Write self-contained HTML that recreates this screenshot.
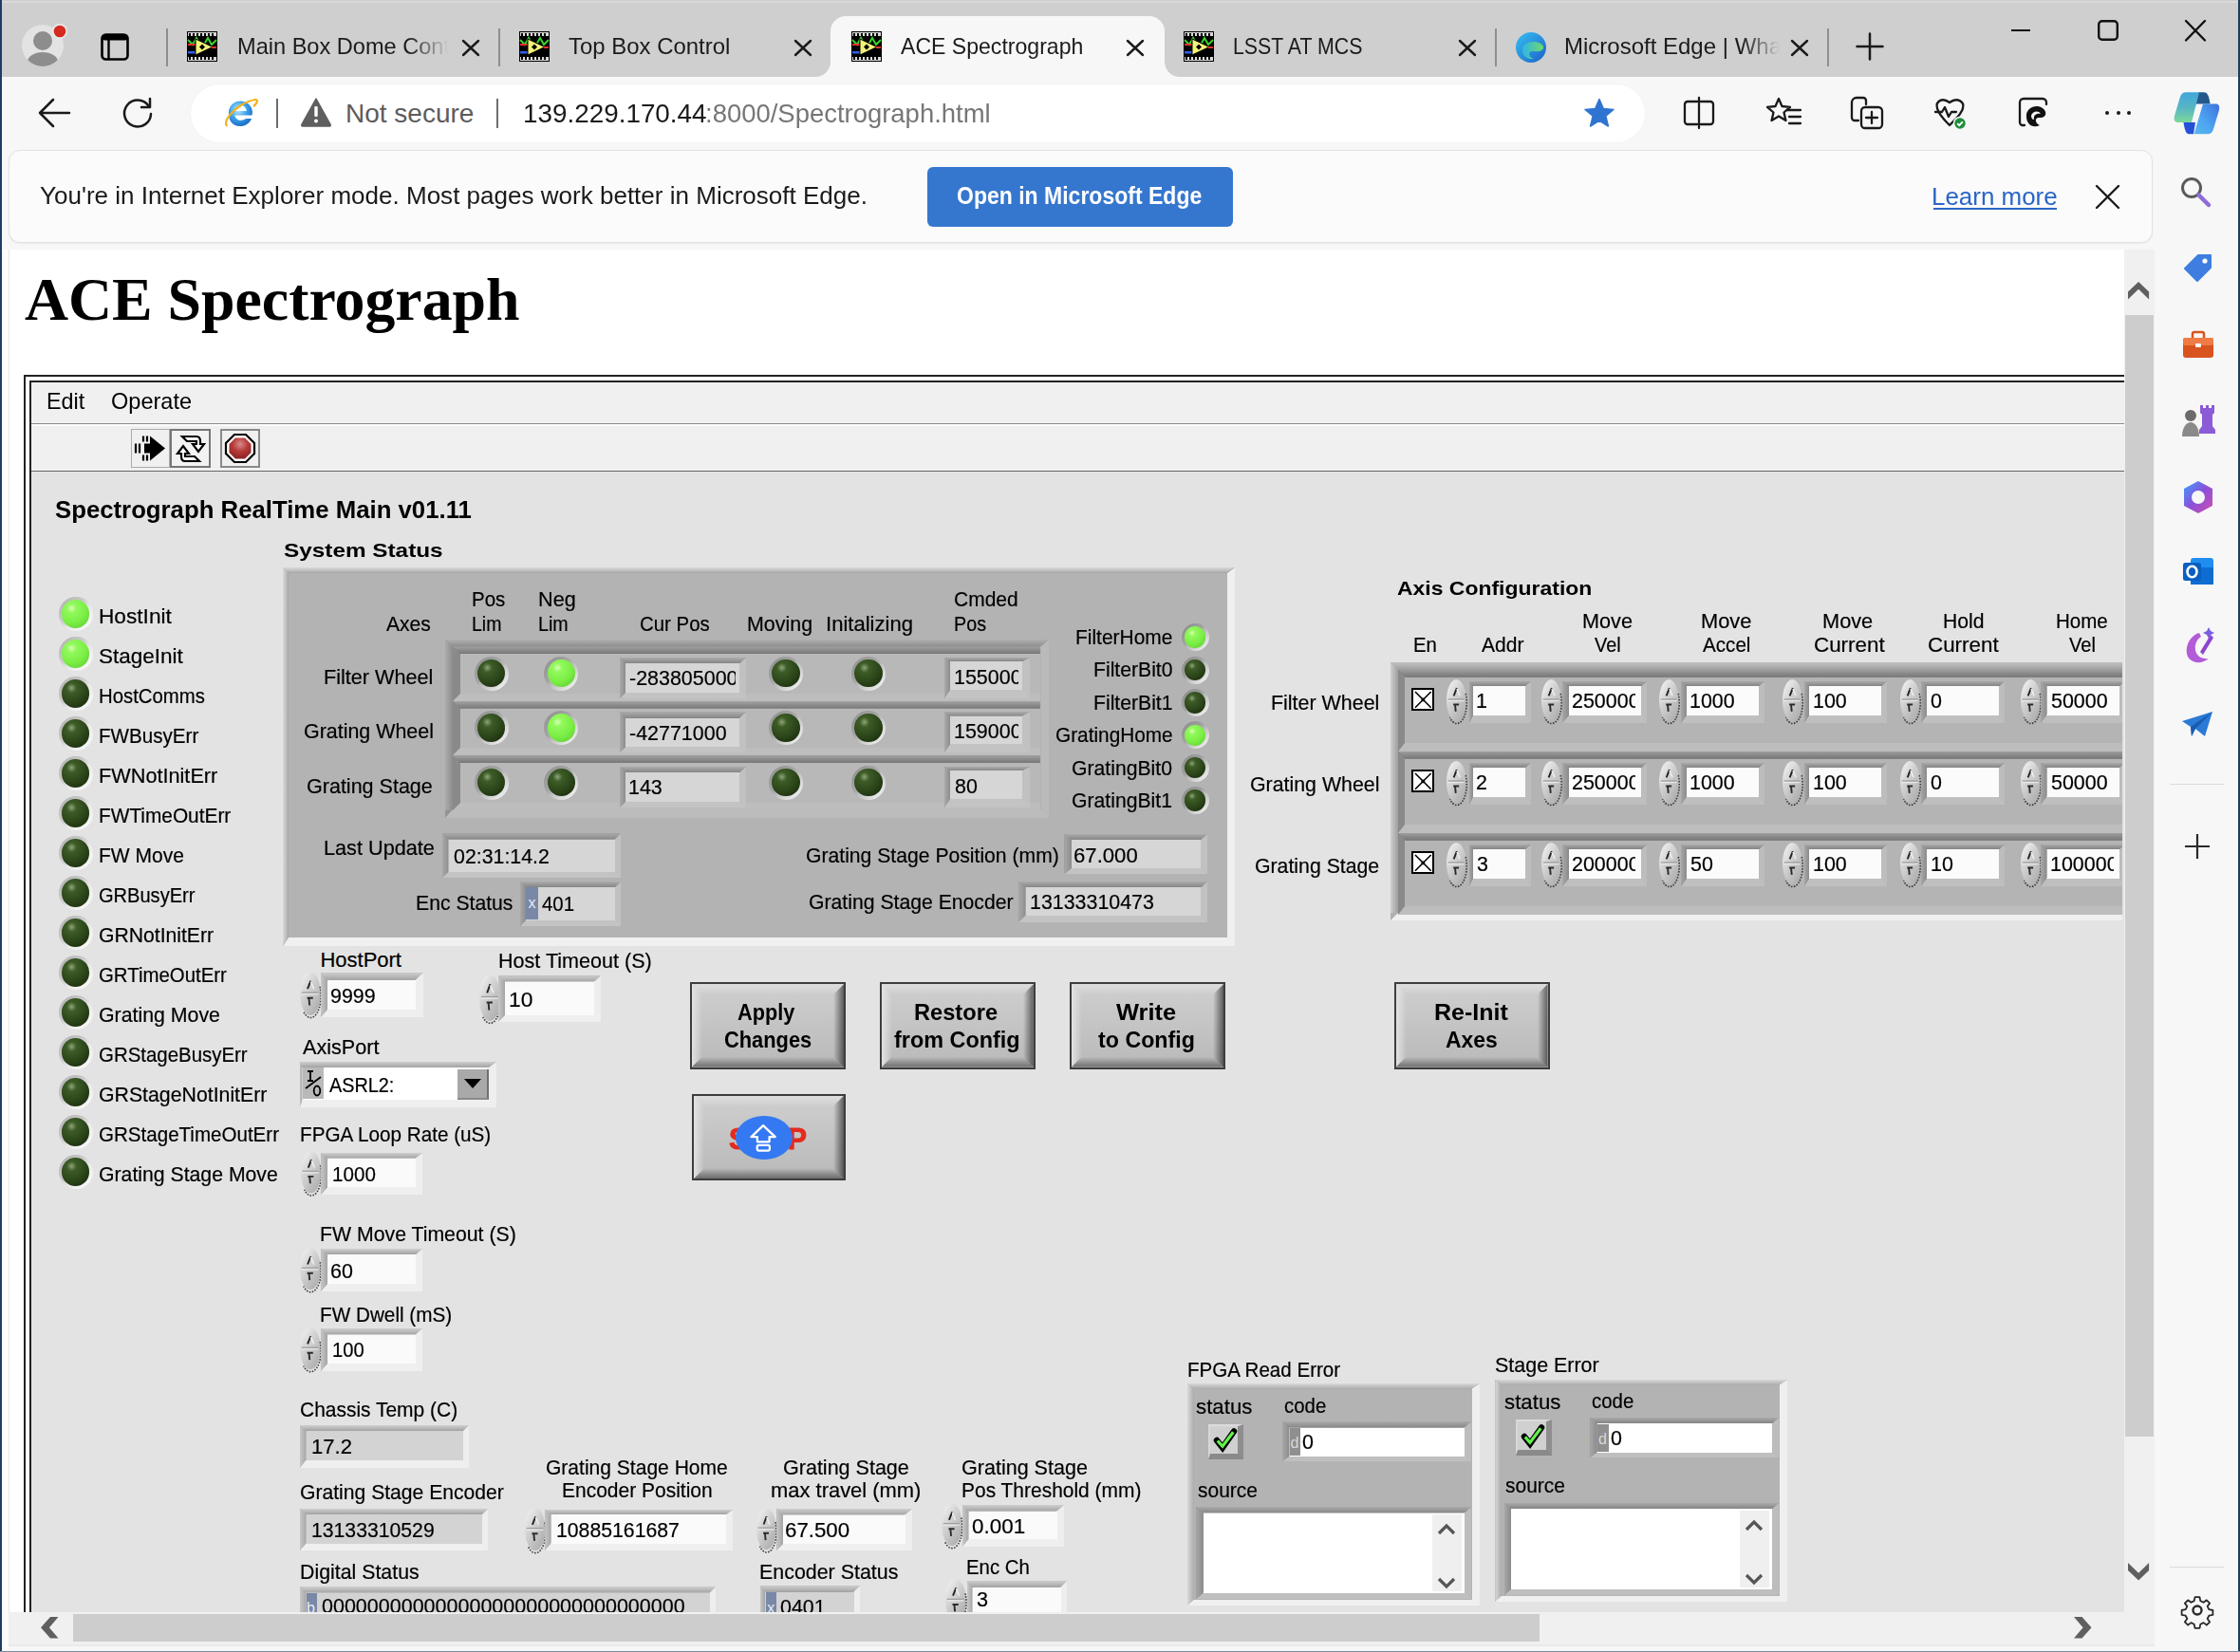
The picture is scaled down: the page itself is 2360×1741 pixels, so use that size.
<!DOCTYPE html>
<html><head><meta charset="utf-8"><style>
html,body{margin:0;padding:0}
body{width:2360px;height:1741px;position:relative;overflow:hidden;background:#f7f7f7;font-family:"Liberation Sans",sans-serif}
.a{position:absolute}
.tx{position:absolute;line-height:0;white-space:nowrap;transform-origin:0 0}
svg{overflow:visible}
</style></head><body>
<svg width="0" height="0" style="position:absolute"><defs>
<linearGradient id="spg" x1="0.1" y1="0" x2="0.9" y2="1"><stop offset="0" stop-color="#f4f4f4"/><stop offset=".4" stop-color="#d2d2d2"/><stop offset="1" stop-color="#a9a9a9"/></linearGradient>
</defs></svg>
<div class="a " style="left:0.00px;top:0.00px;width:2360.00px;height:1741.00px;background:#f7f7f7"></div>
<div class="a " style="left:0.00px;top:0.00px;width:2360.00px;height:81.00px;background:#cfcfcf"></div>
<div class="a " style="left:0.00px;top:1.00px;width:2360.00px;height:2.00px;background:#d9d9d9"></div>
<svg class="a" style="left:20px;top:22px" width="56" height="54" viewBox="0 0 56 54">
<circle cx="25" cy="26" r="22" fill="#e3e3e3"/>
<clipPath id="avc"><circle cx="25" cy="26" r="22"/></clipPath>
<g clip-path="url(#avc)"><circle cx="25" cy="21" r="10" fill="#8d8d8d"/><ellipse cx="25" cy="43" rx="16" ry="10" fill="#8d8d8d"/></g>
<circle cx="43" cy="11" r="8" fill="#eaeaea"/><circle cx="43" cy="11" r="6.3" fill="#d52b1e"/>
</svg>
<svg class="a" style="left:105px;top:34px" width="32" height="32" viewBox="0 0 32 32">
<rect x="2.5" y="2.5" width="27" height="26" rx="4" fill="none" stroke="#000" stroke-width="2.6"/>
<rect x="2.5" y="2.5" width="27" height="6" rx="3" fill="#000"/><path d="M9.5 8v20" stroke="#000" stroke-width="2.4"/></svg>
<div class="a " style="left:175.00px;top:30.00px;width:2.00px;height:40.00px;background:#8e8e8e"></div>
<div class="a " style="left:525.00px;top:30.00px;width:2.00px;height:40.00px;background:#8e8e8e"></div>
<div class="a " style="left:1574.50px;top:30.00px;width:2.00px;height:40.00px;background:#8e8e8e"></div>
<div class="a " style="left:1925.00px;top:30.00px;width:2.00px;height:40.00px;background:#8e8e8e"></div>
<div class="a " style="left:875.00px;top:17.00px;width:352.00px;height:64.00px;background:#f7f7f7;border-radius:16px 16px 0 0"></div>
<div class="a " style="left:859.00px;top:65.00px;width:16.00px;height:16.00px;background:radial-gradient(circle at 0 0,#cfcfcf 15.5px,#f7f7f7 16.5px)"></div>
<div class="a " style="left:1227.00px;top:65.00px;width:16.00px;height:16.00px;background:radial-gradient(circle at 100% 0,#cfcfcf 15.5px,#f7f7f7 16.5px)"></div>
<svg class="a" style="left:197px;top:33px" width="32" height="32" viewBox="0 0 32 32">
<rect x="0" y="0" width="32" height="32" fill="#000"/>
<rect x="1" y="1" width="30" height="4" fill="#fff" opacity=".85"/><rect x="1" y="27" width="30" height="4" fill="#fff" opacity=".85"/>
<path d="M3 2v3M7 2v3M11 2v3M15 2v3M19 2v3M23 2v3M27 2v3M3 27v3M7 27v3M11 27v3M15 27v3M19 27v3M23 27v3M27 27v3" stroke="#000" stroke-width="2"/>
<path d="M1 9 L6 14 L10 7 L14 14 M18 14 L22 7 L26 14 L31 9" stroke="#3ad12c" stroke-width="2" fill="none"/>
<rect x="1" y="13" width="8" height="2" fill="#e53030"/><rect x="1" y="21" width="8" height="2.5" fill="#2f5ee8"/>
<path d="M9 8 L27 16.5 L9 25 Z" fill="#f3f37a" stroke="#000" stroke-width="1"/>
<path d="M13 16.5 l3 -3 l3 3 l-3 3z" fill="#000"/>
<rect x="26" y="16" width="5" height="2" fill="#e53030"/>
</svg>
<svg class="a" style="left:547px;top:33px" width="32" height="32" viewBox="0 0 32 32">
<rect x="0" y="0" width="32" height="32" fill="#000"/>
<rect x="1" y="1" width="30" height="4" fill="#fff" opacity=".85"/><rect x="1" y="27" width="30" height="4" fill="#fff" opacity=".85"/>
<path d="M3 2v3M7 2v3M11 2v3M15 2v3M19 2v3M23 2v3M27 2v3M3 27v3M7 27v3M11 27v3M15 27v3M19 27v3M23 27v3M27 27v3" stroke="#000" stroke-width="2"/>
<path d="M1 9 L6 14 L10 7 L14 14 M18 14 L22 7 L26 14 L31 9" stroke="#3ad12c" stroke-width="2" fill="none"/>
<rect x="1" y="13" width="8" height="2" fill="#e53030"/><rect x="1" y="21" width="8" height="2.5" fill="#2f5ee8"/>
<path d="M9 8 L27 16.5 L9 25 Z" fill="#f3f37a" stroke="#000" stroke-width="1"/>
<path d="M13 16.5 l3 -3 l3 3 l-3 3z" fill="#000"/>
<rect x="26" y="16" width="5" height="2" fill="#e53030"/>
</svg>
<svg class="a" style="left:897px;top:33px" width="32" height="32" viewBox="0 0 32 32">
<rect x="0" y="0" width="32" height="32" fill="#000"/>
<rect x="1" y="1" width="30" height="4" fill="#fff" opacity=".85"/><rect x="1" y="27" width="30" height="4" fill="#fff" opacity=".85"/>
<path d="M3 2v3M7 2v3M11 2v3M15 2v3M19 2v3M23 2v3M27 2v3M3 27v3M7 27v3M11 27v3M15 27v3M19 27v3M23 27v3M27 27v3" stroke="#000" stroke-width="2"/>
<path d="M1 9 L6 14 L10 7 L14 14 M18 14 L22 7 L26 14 L31 9" stroke="#3ad12c" stroke-width="2" fill="none"/>
<rect x="1" y="13" width="8" height="2" fill="#e53030"/><rect x="1" y="21" width="8" height="2.5" fill="#2f5ee8"/>
<path d="M9 8 L27 16.5 L9 25 Z" fill="#f3f37a" stroke="#000" stroke-width="1"/>
<path d="M13 16.5 l3 -3 l3 3 l-3 3z" fill="#000"/>
<rect x="26" y="16" width="5" height="2" fill="#e53030"/>
</svg>
<svg class="a" style="left:1247px;top:33px" width="32" height="32" viewBox="0 0 32 32">
<rect x="0" y="0" width="32" height="32" fill="#000"/>
<rect x="1" y="1" width="30" height="4" fill="#fff" opacity=".85"/><rect x="1" y="27" width="30" height="4" fill="#fff" opacity=".85"/>
<path d="M3 2v3M7 2v3M11 2v3M15 2v3M19 2v3M23 2v3M27 2v3M3 27v3M7 27v3M11 27v3M15 27v3M19 27v3M23 27v3M27 27v3" stroke="#000" stroke-width="2"/>
<path d="M1 9 L6 14 L10 7 L14 14 M18 14 L22 7 L26 14 L31 9" stroke="#3ad12c" stroke-width="2" fill="none"/>
<rect x="1" y="13" width="8" height="2" fill="#e53030"/><rect x="1" y="21" width="8" height="2.5" fill="#2f5ee8"/>
<path d="M9 8 L27 16.5 L9 25 Z" fill="#f3f37a" stroke="#000" stroke-width="1"/>
<path d="M13 16.5 l3 -3 l3 3 l-3 3z" fill="#000"/>
<rect x="26" y="16" width="5" height="2" fill="#e53030"/>
</svg>
<svg class="a" style="left:1596px;top:33px" width="34" height="34" viewBox="0 0 34 34">
<defs><linearGradient id="edg1" x1="0" y1="0" x2="1" y2="1"><stop offset="0" stop-color="#35c1f1"/><stop offset="1" stop-color="#1d5fc9"/></linearGradient>
<linearGradient id="edg2" x1="0" y1="0" x2="1" y2="0"><stop offset="0" stop-color="#2fb5e8"/><stop offset="1" stop-color="#6ed76a"/></linearGradient></defs>
<circle cx="17" cy="17" r="16" fill="url(#edg1)"/>
<path d="M8 19 C 8 10, 26 8, 30 16 C 31 20, 26 22, 20 21 C 14 20, 13 26, 20 29 C 12 30, 7 25, 8 19Z" fill="url(#edg2)"/>
<path d="M12 20 C 13 14, 23 14, 24 18 C 19 17, 15 19, 16 24 C 13 24, 12 22, 12 20Z" fill="#fff" opacity=".0"/>
</svg>
<div class="a" style="left:240px;top:20px;width:260px;height:50px;-webkit-mask-image:linear-gradient(90deg,#000 0,#000 190px,transparent 232px);mask-image:linear-gradient(90deg,#000 0,#000 190px,transparent 232px);">
<div class="tx" style="left:9.62px;top:29.30px;font-family:'Liberation Sans';font-weight:400;font-size:24px;color:#1b1b1b;transform:scaleX(0.9820);">Main Box Dome Control</div>
</div>
<div class="tx" style="left:599.00px;top:49.30px;font-family:'Liberation Sans';font-weight:400;font-size:24px;color:#1b1b1b;transform:scaleX(0.9975);">Top Box Control</div>
<div class="tx" style="left:949.00px;top:49.40px;font-family:'Liberation Sans';font-weight:400;font-size:24px;color:#1b1b1b;transform:scaleX(0.9609);">ACE Spectrograph</div>
<div class="tx" style="left:1299.11px;top:49.30px;font-family:'Liberation Sans';font-weight:400;font-size:24px;color:#1b1b1b;transform:scaleX(0.8895);">LSST AT MCS</div>
<div class="a" style="left:1640px;top:20px;width:260px;height:50px;-webkit-mask-image:linear-gradient(90deg,#000 0,#000 195px,transparent 235px);mask-image:linear-gradient(90deg,#000 0,#000 195px,transparent 235px);">
<div class="tx" style="left:8.00px;top:29.30px;font-family:'Liberation Sans';font-weight:400;font-size:24px;color:#1b1b1b;">Microsoft Edge | What's New</div>
</div>
<svg class="a" style="left:487px;top:42px" width="18" height="17"><path d="M1 1L17 16M17 1L1 16" stroke="#1a1a1a" stroke-width="2.4" stroke-linecap="round"/></svg>
<svg class="a" style="left:837px;top:42px" width="18" height="17"><path d="M1 1L17 16M17 1L1 16" stroke="#1a1a1a" stroke-width="2.4" stroke-linecap="round"/></svg>
<svg class="a" style="left:1187px;top:42px" width="18" height="17"><path d="M1 1L17 16M17 1L1 16" stroke="#1a1a1a" stroke-width="2.4" stroke-linecap="round"/></svg>
<svg class="a" style="left:1537px;top:42px" width="18" height="17"><path d="M1 1L17 16M17 1L1 16" stroke="#1a1a1a" stroke-width="2.4" stroke-linecap="round"/></svg>
<svg class="a" style="left:1887px;top:42px" width="18" height="17"><path d="M1 1L17 16M17 1L1 16" stroke="#1a1a1a" stroke-width="2.4" stroke-linecap="round"/></svg>
<svg class="a" style="left:1955px;top:34px" width="30" height="30"><path d="M15 1.5V28.5M1.5 15H28.5" stroke="#1a1a1a" stroke-width="2.5" stroke-linecap="round"/></svg>
<div class="a " style="left:2119.00px;top:31.00px;width:20.00px;height:2.20px;background:#111"></div>
<svg class="a" style="left:2209px;top:20px" width="24" height="24"><rect x="2.2" y="2.2" width="19.6" height="19.6" rx="3.5" fill="none" stroke="#111" stroke-width="2.4"/></svg>
<svg class="a" style="left:2302px;top:20.5px" width="22" height="22.5"><path d="M1 1L21 21.5M21 1L1 21.5" stroke="#111" stroke-width="2.4" stroke-linecap="round"/></svg>
<svg class="a" style="left:39px;top:101px" width="36" height="36"><path d="M3 18H34M3 18L17 4M3 18L17 32" stroke="#1a1a1a" stroke-width="2.5" fill="none" stroke-linecap="round"/></svg>
<svg class="a" style="left:127px;top:101px" width="37" height="37"><path d="M29.5 10.5 A14 14 0 1 0 32 19" stroke="#1a1a1a" stroke-width="2.5" fill="none" stroke-linecap="round"/><path d="M31 3V12H22" stroke="#1a1a1a" stroke-width="2.5" fill="none" stroke-linecap="round" stroke-linejoin="round"/></svg>
<div class="a " style="left:200.60px;top:89.00px;width:1532.40px;height:61.00px;background:#fff;border-radius:31px;box-shadow:0 0 0 1px rgba(0,0,0,.015)"></div>
<svg class="a" style="left:236px;top:102px" width="36" height="34" viewBox="0 0 36 34">
<defs><radialGradient id="ieg" cx=".4" cy=".35" r=".7"><stop offset="0" stop-color="#bfeaff"/><stop offset=".5" stop-color="#3ea6ea"/><stop offset="1" stop-color="#1766c2"/></radialGradient></defs>
<path d="M5 18 a12.5 12 0 1 1 24.5 1.5H11.5c.5 5 6.5 7 11.5 3.5h6c-2 5-6.5 8-12 8C9 31 5 25.5 5 18zM11.8 15h12c-.5-4-3-6-6-6s-5.5 2-6 6z" fill="url(#ieg)"/>
<path d="M3 31 C -2 23, 18 5, 33 3 C 37 3, 34 8, 31 10" stroke="#f3b21c" stroke-width="2.2" fill="none"/>
</svg>
<div class="a " style="left:291.40px;top:104.00px;width:2.00px;height:31.00px;background:#6d6d6d"></div>
<svg class="a" style="left:316px;top:102px" width="34" height="32" viewBox="0 0 34 32"><path d="M17 2 L32 29 Q33 31 31 31 H3 Q1 31 2 29 Z" fill="#5f5f5f" stroke="#5f5f5f" stroke-width="1.5" stroke-linejoin="round"/><rect x="15.3" y="10" width="3.4" height="11" rx="1" fill="#fff"/><circle cx="17" cy="25.5" r="2" fill="#fff"/></svg>
<div class="tx" style="left:364.00px;top:120.00px;font-family:'Liberation Sans';font-weight:400;font-size:28px;color:#5c5c5c;">Not secure</div>
<div class="a " style="left:523.00px;top:104.00px;width:2.00px;height:31.00px;background:#6d6d6d"></div>
<div class="tx" style="left:551.01px;top:120.00px;font-family:'Liberation Sans';font-weight:400;font-size:28px;color:#1a1a1a;transform:scaleX(0.9945);">139.229.170.44</div>
<div class="tx" style="left:742.54px;top:120.00px;font-family:'Liberation Sans';font-weight:400;font-size:28px;color:#767676;transform:scaleX(0.9805);">:8000/Spectrograph.html</div>
<svg class="a" style="left:1668px;top:103px" width="34" height="33" viewBox="0 0 34 33"><path d="M17 1.5 L21.3 11.6 L32 12.4 L23.8 19.3 L26.4 30 L17 24.2 L7.6 30 L10.2 19.3 L2 12.4 L12.7 11.6 Z" fill="#2f74d0" stroke="#2f74d0" stroke-width="1.5" stroke-linejoin="round"/></svg>
<svg class="a" style="left:1772px;top:102px" width="36" height="34"><path d="M16 5H6a3 3 0 0 0-3 3v18a3 3 0 0 0 3 3h10M20 5h10a3 3 0 0 1 3 3v18a3 3 0 0 1-3 3H20M18 1v32" stroke="#1a1a1a" stroke-width="2.3" fill="none" stroke-linecap="round" stroke-linejoin="round"/></svg>
<svg class="a" style="left:1860px;top:101px" width="40" height="36"><path d="M14 3 L17.5 11 L26 11.8 L19.5 17.5 L21.5 26 L14 21.5 L6.5 26 L8.5 17.5 L2 11.8 L10.5 11 Z" stroke="#1a1a1a" stroke-width="2.3" fill="none" stroke-linecap="round" stroke-linejoin="round"/><path d="M23 15H37M25 22H37M25 29H37" stroke="#1a1a1a" stroke-width="2.3" fill="none" stroke-linecap="round" stroke-linejoin="round"/></svg>
<svg class="a" style="left:1948px;top:100px" width="38" height="38"><path d="M10 27 L6 27 A3 3 0 0 1 3 24 V8 A5 5 0 0 1 8 3 H15 A3 3 0 0 1 18 6 V10" stroke="#1a1a1a" stroke-width="2.3" fill="none" stroke-linecap="round" stroke-linejoin="round"/><rect x="13" y="13" width="22" height="22" rx="4" stroke="#1a1a1a" stroke-width="2.3" fill="none" stroke-linecap="round" stroke-linejoin="round"/><path d="M24 18V30M18 24H30" stroke="#1a1a1a" stroke-width="2.3" fill="none" stroke-linecap="round" stroke-linejoin="round"/></svg>
<svg class="a" style="left:2036px;top:101px" width="38" height="36"><path d="M5 13 C 3 6, 10 1, 18 7 C 26 1, 34 6, 32 13 C 31 19, 24 25, 18 31 C 12 25, 6 19, 5 13Z" stroke="#1a1a1a" stroke-width="2.3" fill="none" stroke-linecap="round" stroke-linejoin="round"/><path d="M3 17H10L13 12L17 22L20 17H25" stroke="#1a1a1a" stroke-width="2.3" fill="none" stroke-linecap="round" stroke-linejoin="round"/><circle cx="29" cy="29" r="6.5" fill="#1e8f3a" stroke="#f7f7f7" stroke-width="1.5"/><path d="M26.2 29.2l2 2 3.6-3.8" stroke="#fff" stroke-width="1.8" fill="none"/></svg>
<svg class="a" style="left:2125px;top:101px" width="36" height="36"><path d="M8 31H6A3 3 0 0 1 3 28V7A4 4 0 0 1 7 3H27A4 4 0 0 1 31 7V9" stroke="#1a1a1a" stroke-width="2.3" fill="none" stroke-linecap="round" stroke-linejoin="round"/><path d="M10 22 C 9 13, 20 8, 27 13 C 33 17, 30 24, 24 23 C 19 22, 18 28, 24 31 C 16 35, 10 29, 10 22Z" fill="#111"/><path d="M15 21 C 16 16, 23 15, 25 19 C 21 18, 17 20, 18 25 C 16 25, 15 23, 15 21Z" fill="#f7f7f7"/></svg>
<div class="a " style="left:2218.00px;top:116.50px;width:4.00px;height:4.00px;background:#1a1a1a;border-radius:50%"></div>
<div class="a " style="left:2229.50px;top:116.50px;width:4.00px;height:4.00px;background:#1a1a1a;border-radius:50%"></div>
<div class="a " style="left:2241.00px;top:116.50px;width:4.00px;height:4.00px;background:#1a1a1a;border-radius:50%"></div>
<svg class="a" style="left:2280px;top:90px" width="70" height="60" viewBox="0 0 70 60">
<defs><linearGradient id="cpl" x1="0" y1="0" x2="0" y2="1"><stop offset="0" stop-color="#42a6dc"/><stop offset=".5" stop-color="#56b5c6"/><stop offset="1" stop-color="#7ed89a"/></linearGradient>
<linearGradient id="cpr" x1="1" y1="0" x2="0" y2="1"><stop offset="0" stop-color="#3d72dc"/><stop offset=".6" stop-color="#4ea6f2"/><stop offset="1" stop-color="#58b8ea"/></linearGradient></defs>
<path d="M36 7.3 H42 C46 7.3 47.5 12 48.5 19.5 H33 Z" fill="#24598a"/>
<path d="M20.5 39 H33 L31 51.2 H26 C23 51.2 21.5 46 20.5 39 Z" fill="#2450d8"/>
<path d="M23 7.3 H37 L29 38.9 H14 C11 38.9 10 36 11 32 L17 12 C18 9 20 7.3 23 7.3 Z" fill="url(#cpl)"/>
<path d="M41 19.6 H54.5 C57.5 19.6 58.8 22 58 26 L52 46 C51 49.5 49 51.2 46 51.2 H31.6 Z" fill="url(#cpr)"/>
</svg>
<div class="a " style="left:9.00px;top:158.00px;width:2259.00px;height:98.00px;background:#fbfbfb;border:1px solid #e2e2e2;border-radius:12px;box-sizing:border-box;box-shadow:0 1px 2px rgba(0,0,0,.06)"></div>
<div class="tx" style="left:41.70px;top:206.00px;font-family:'Liberation Sans';font-weight:400;font-size:25px;color:#1a1a1a;transform:scaleX(1.0411);">You're in Internet Explorer mode. Most pages work better in Microsoft Edge.</div>
<div class="a " style="left:977.00px;top:176.00px;width:322.00px;height:63.00px;background:#3577cf;border-radius:6px"></div>
<div class="tx" style="left:1008.48px;top:206.40px;font-family:'Liberation Sans';font-weight:700;font-size:25px;color:#fff;transform:scaleX(0.9204);">Open in Microsoft Edge</div>
<div class="tx" style="left:2034.93px;top:206.50px;font-family:'Liberation Sans';font-weight:400;font-size:25px;color:#2a66c5;transform:scaleX(1.0373);">Learn more</div>
<div class="a " style="left:2037.00px;top:219.00px;width:129.60px;height:2.00px;background:#2a66c5"></div>
<svg class="a" style="left:2208px;top:194.5px" width="25" height="25.0"><path d="M1 1L24 24.0M24 1L1 24.0" stroke="#1a1a1a" stroke-width="2.4" stroke-linecap="round"/></svg>
<svg class="a" style="left:2296px;top:185px" width="36" height="36"><circle cx="13" cy="13" r="9.5" stroke="#5a5a5a" stroke-width="3" fill="none"/><path d="M20.5 20.5L31 31" stroke="#8f6bd8" stroke-width="4.5" stroke-linecap="round"/></svg>
<svg class="a" style="left:2298px;top:266px" width="36" height="34"><path d="M4 17 L18 3 H31 V16 L17 30 Z" fill="#3f7ee0" stroke="#3f7ee0" stroke-width="2" stroke-linejoin="round"/><path d="M4 17 L17 30 L10 23Z" fill="#2b62bf"/><circle cx="25" cy="9" r="2.6" fill="#fff"/></svg>
<svg class="a" style="left:2298px;top:346px" width="36" height="34"><rect x="2" y="10" width="32" height="21" rx="3" fill="#d9531e"/><rect x="2" y="10" width="32" height="8" rx="2" fill="#ef7b45"/><path d="M12 10V6a2 2 0 0 1 2-2h8a2 2 0 0 1 2 2v4" stroke="#d9531e" stroke-width="2.5" fill="none"/><rect x="15" y="16" width="6" height="4" rx="1" fill="#fff"/></svg>
<svg class="a" style="left:2296px;top:422px" width="40" height="42"><circle cx="12" cy="16" r="6" fill="#6b6b6b"/><path d="M3 38 C 3 28, 8 23, 12 23 C 16 23, 21 28, 21 38Z" fill="#8a8a8a"/><path d="M22 5h3v3h3V5h3v3h3V5h3v8l-2 2v12l3 4v4H21v-4l3-4V15l-2-2Z" fill="#8b5cd6"/></svg>
<svg class="a" style="left:2297px;top:505px" width="38" height="38" viewBox="0 0 38 38"><defs><linearGradient id="m365" x1="0" y1="0" x2="1" y2="1"><stop offset="0" stop-color="#3aa0ff"/><stop offset=".5" stop-color="#8c4fd8"/><stop offset="1" stop-color="#d14fb0"/></linearGradient></defs>
<path d="M19 2 L34 10 V28 L19 36 L4 28 V10Z" fill="url(#m365)"/><circle cx="19" cy="19" r="7" fill="#f7f7f7"/></svg>
<svg class="a" style="left:2298px;top:584px" width="36" height="36"><rect x="10" y="4" width="24" height="28" rx="3" fill="#1f8ef0"/><rect x="10" y="14" width="24" height="18" fill="#0f6cd0"/><rect x="2" y="9" width="19" height="19" rx="2.5" fill="#0a5fc2"/><ellipse cx="11.5" cy="18.5" rx="5" ry="5.8" stroke="#fff" stroke-width="2.6" fill="none"/></svg>
<svg class="a" style="left:2297px;top:659px" width="38" height="44"><path d="M20 8 C 12 10, 5 20, 7 30 C 9 40, 22 42, 30 35 C 24 36, 17 33, 16 26 C 15 20, 18 14, 22 12Z" fill="#b45bd8"/><path d="M21 28 L32 10 L35 13 L24 31Z" fill="#8c46d0"/><path d="M30 2 l2 4 4 2 -4 2 -2 4 -2-4 -4-2 4-2z" fill="#7b5ce6"/></svg>
<svg class="a" style="left:2297px;top:748px" width="38" height="30"><path d="M2 12 L34 2 L26 28 L16 20 L12 28 L11 18Z" fill="#2a7ad6"/><path d="M11 18 L34 2 L16 20 L12 28Z" fill="#1a5bb0"/></svg>
<div class="a " style="left:2286.00px;top:825.50px;width:57.00px;height:1.50px;background:#dadada"></div>
<svg class="a" style="left:2300px;top:877px" width="30" height="30"><path d="M15 2V28M2 15H28" stroke="#2a2a2a" stroke-width="2.2"/></svg>
<div class="a " style="left:2286.00px;top:1650.50px;width:57.00px;height:1.50px;background:#dadada"></div>
<svg class="a" style="left:2295px;top:1677px" width="40" height="40" viewBox="0 0 40 40"><path d="M17 3h6l1 5 4 2 4-3 4 4-3 4 2 4 5 1v6l-5 1-2 4 3 4-4 4-4-3-4 2-1 5h-6l-1-5-4-2-4 3-4-4 3-4-2-4-5-1v-6l5-1 2-4-3-4 4-4 4 3 4-2z" fill="none" stroke="#2a2a2a" stroke-width="2.2" stroke-linejoin="round" transform="translate(20 20) scale(.82) translate(-20 -20)"/><circle cx="20" cy="20" r="4.5" fill="none" stroke="#2a2a2a" stroke-width="2.4"/></svg>
<div class="a " style="left:2.00px;top:263.00px;width:7.00px;height:1476.00px;background:#fcfcfc"></div>
<div class="a " style="left:9.00px;top:263.00px;width:2261.00px;height:1470.00px;background:#fff"></div>
<div class="a " style="left:9.00px;top:263.00px;width:1.00px;height:1470.00px;background:#e6e6e6"></div>
<div class="a " style="left:2238.00px;top:263.00px;width:32.00px;height:1436.00px;background:#f0f0f0"></div>
<div class="a " style="left:2239.00px;top:332.00px;width:29.50px;height:1182.00px;background:#cdcdcd"></div>
<svg class="a" style="left:2242.4px;top:297px" width="23" height="19"><path d="M0 10.5L11.1 0L22.1 10.5V18.5L11.1 7.8L0 18.5Z" fill="#5f5f5f"/></svg>
<svg class="a" style="left:2242.2px;top:1646.5px" width="23" height="19"><path d="M0 8L11.1 18.5L22.1 8V0L11.1 10.7L0 0Z" fill="#5f5f5f"/></svg>
<div class="a " style="left:9.00px;top:1699.00px;width:2229.00px;height:34.00px;background:#f0f0f0"></div>
<div class="a " style="left:77.00px;top:1701.00px;width:1545.00px;height:29.00px;background:#cdcdcd"></div>
<div class="a " style="left:2238.00px;top:1699.00px;width:32.00px;height:34.00px;background:#f0f0f0"></div>
<svg class="a" style="left:42.9px;top:1704.3px" width="19" height="23"><path d="M10 0H18.5L8.9 11.2L18.5 22.4H10L0 11.2Z" fill="#5f5f5f"/></svg>
<svg class="a" style="left:2184.5px;top:1704.3px" width="19" height="23"><path d="M8.5 0H0L9.6 11.2L0 22.4H8.5L18.5 11.2Z" fill="#5f5f5f"/></svg>
<div class="a " style="left:9.00px;top:1733.00px;width:2261.00px;height:2.00px;background:#e9e9e9"></div>
<div class="a " style="left:0.00px;top:0.00px;width:2.00px;height:1741.00px;background:#1f3d63"></div>
<div class="a " style="left:2358.00px;top:0.00px;width:2.00px;height:1741.00px;background:#1f3d63"></div>
<div class="a " style="left:0.00px;top:1739.50px;width:2360.00px;height:1.50px;background:#7d8e9e"></div>
<div class="a" style="left:0;top:0;width:2238px;height:1699px;overflow:hidden">
<div class="tx" style="left:25.60px;top:316.00px;font-family:'Liberation Serif';font-weight:700;font-size:64px;color:#000;transform:scaleX(0.9966);">ACE Spectrograph</div>
<div class="a " style="left:25.40px;top:395.40px;width:2212.60px;height:1303.60px;background:#222"></div>
<div class="a " style="left:27.40px;top:397.40px;width:2210.60px;height:1301.60px;background:#fff"></div>
<div class="a " style="left:31.40px;top:401.40px;width:2206.60px;height:1297.60px;background:#222"></div>
<div class="a " style="left:33.40px;top:403.40px;width:2204.60px;height:1295.60px;background:#f0f0f0"></div>
<div class="a " style="left:33.40px;top:445.70px;width:2204.60px;height:1.50px;background:#8c8c8c"></div>
<div class="a " style="left:33.40px;top:447.20px;width:2204.60px;height:1.50px;background:#fcfcfc"></div>
<div class="a " style="left:33.40px;top:495.90px;width:2204.60px;height:1.50px;background:#676767"></div>
<div class="a " style="left:33.40px;top:497.40px;width:2204.60px;height:1201.60px;background:#e3e3e3"></div>
<div class="tx" style="left:49.03px;top:423.00px;font-family:'Liberation Sans';font-weight:400;font-size:24px;color:#000;transform:scaleX(0.9733);">Edit</div>
<div class="tx" style="left:116.82px;top:423.00px;font-family:'Liberation Sans';font-weight:400;font-size:24px;color:#000;transform:scaleX(0.9804);">Operate</div>
<div class="a " style="left:137.70px;top:452.00px;width:41.10px;height:40.50px;box-sizing:border-box;border:1.5px solid #ababab;background:#f0f0f0"></div>
<div class="a " style="left:178.80px;top:452.00px;width:43.20px;height:40.50px;box-sizing:border-box;border:2px solid #767676;background:#f2f2f2"></div>
<div class="a " style="left:231.60px;top:452.00px;width:42.80px;height:40.50px;box-sizing:border-box;border:2px solid #8a8a8a;background:#f0f0f0"></div>
<svg class="a" style="left:142px;top:458px" width="34" height="30"><path d="M1 9.5v10M5 9.5v10M9 1.5v6M13 1.5v6M9 21.5v6M13 21.5v6" stroke="#000" stroke-width="2.2"/><path d="M10 9.5H16V1.5L32 14.5L16 27.5V19.5H10Z" fill="#000"/></svg>
<svg class="a" style="left:183px;top:456px" width="36" height="34" viewBox="0 0 36 34"><g fill="#fff" stroke="#000" stroke-width="2.2" stroke-linejoin="miter"><path d="M9 4 H24 C27 4 28 6 28 9 V12 H32 L26 20 L20 12 H24 V9 H14 Z"/><path d="M27 30 H12 C9 30 8 28 8 25 V22 H4 L10 14 L16 22 H12 V25 H22 Z"/></g></svg>
<svg class="a" style="left:236px;top:456px" width="34" height="33" viewBox="0 0 34 33"><defs><radialGradient id="stopg" cx=".5" cy=".3" r=".7"><stop offset="0" stop-color="#d98b8b"/><stop offset=".5" stop-color="#b83a3a"/><stop offset="1" stop-color="#8e2424"/></radialGradient></defs>
<path d="M11 2 H23 L32 11 V22 L23 31 H11 L2 22 V11 Z" fill="#fff" stroke="#000" stroke-width="2.2"/><path d="M12 5.5 H22 L28.5 12 V21 L22 27.5 H12 L5.5 21 V12 Z" fill="url(#stopg)"/></svg>
<div class="tx" style="left:58.00px;top:537.00px;font-family:'Liberation Sans';font-weight:700;font-size:25px;color:#000;transform:scaleX(1.0300);">Spectrograph RealTime Main v01.11</div>
<div class="tx" style="left:298.75px;top:579.90px;font-family:'Liberation Sans';font-weight:700;font-size:21px;color:#000;transform:scaleX(1.1583);">System Status</div>
<div class="a " style="left:62.00px;top:629.20px;width:35.60px;height:35.60px;border-radius:50%;background:linear-gradient(135deg,rgba(0,0,0,.24) 0%,rgba(0,0,0,.10) 42%,rgba(255,255,255,.2) 58%,rgba(255,255,255,1) 100%)"></div>
<div class="a " style="left:65.20px;top:632.40px;width:29.20px;height:29.20px;border-radius:50%;background:radial-gradient(circle at 36% 30%,#d8ffb8 0%,#92f95c 17%,#7aee44 55%,#5ac52e 100%)"></div>
<div class="tx" style="left:103.97px;top:650.00px;font-family:'Liberation Sans';font-weight:400;font-size:22px;color:#000;transform:scaleX(1.0303);-webkit-text-stroke:.2px #000;">HostInit</div>
<div class="a " style="left:62.00px;top:671.20px;width:35.60px;height:35.60px;border-radius:50%;background:linear-gradient(135deg,rgba(0,0,0,.24) 0%,rgba(0,0,0,.10) 42%,rgba(255,255,255,.2) 58%,rgba(255,255,255,1) 100%)"></div>
<div class="a " style="left:65.20px;top:674.40px;width:29.20px;height:29.20px;border-radius:50%;background:radial-gradient(circle at 36% 30%,#d8ffb8 0%,#92f95c 17%,#7aee44 55%,#5ac52e 100%)"></div>
<div class="tx" style="left:103.98px;top:692.00px;font-family:'Liberation Sans';font-weight:400;font-size:22px;color:#000;transform:scaleX(1.0230);-webkit-text-stroke:.2px #000;">StageInit</div>
<div class="a " style="left:62.00px;top:713.20px;width:35.60px;height:35.60px;border-radius:50%;background:linear-gradient(135deg,rgba(0,0,0,.24) 0%,rgba(0,0,0,.10) 42%,rgba(255,255,255,.2) 58%,rgba(255,255,255,1) 100%)"></div>
<div class="a " style="left:65.20px;top:716.40px;width:29.20px;height:29.20px;border-radius:50%;background:radial-gradient(circle at 36% 30%,#8ea57a 0%,#3d5c26 18%,#2b4519 55%,#132207 100%)"></div>
<div class="tx" style="left:104.08px;top:734.00px;font-family:'Liberation Sans';font-weight:400;font-size:22px;color:#000;transform:scaleX(0.9249);-webkit-text-stroke:.2px #000;">HostComms</div>
<div class="a " style="left:62.00px;top:755.20px;width:35.60px;height:35.60px;border-radius:50%;background:linear-gradient(135deg,rgba(0,0,0,.24) 0%,rgba(0,0,0,.10) 42%,rgba(255,255,255,.2) 58%,rgba(255,255,255,1) 100%)"></div>
<div class="a " style="left:65.20px;top:758.40px;width:29.20px;height:29.20px;border-radius:50%;background:radial-gradient(circle at 36% 30%,#8ea57a 0%,#3d5c26 18%,#2b4519 55%,#132207 100%)"></div>
<div class="tx" style="left:104.06px;top:776.00px;font-family:'Liberation Sans';font-weight:400;font-size:22px;color:#000;transform:scaleX(0.9360);-webkit-text-stroke:.2px #000;">FWBusyErr</div>
<div class="a " style="left:62.00px;top:797.20px;width:35.60px;height:35.60px;border-radius:50%;background:linear-gradient(135deg,rgba(0,0,0,.24) 0%,rgba(0,0,0,.10) 42%,rgba(255,255,255,.2) 58%,rgba(255,255,255,1) 100%)"></div>
<div class="a " style="left:65.20px;top:800.40px;width:29.20px;height:29.20px;border-radius:50%;background:radial-gradient(circle at 36% 30%,#8ea57a 0%,#3d5c26 18%,#2b4519 55%,#132207 100%)"></div>
<div class="tx" style="left:104.01px;top:818.00px;font-family:'Liberation Sans';font-weight:400;font-size:22px;color:#000;transform:scaleX(0.9858);-webkit-text-stroke:.2px #000;">FWNotInitErr</div>
<div class="a " style="left:62.00px;top:839.20px;width:35.60px;height:35.60px;border-radius:50%;background:linear-gradient(135deg,rgba(0,0,0,.24) 0%,rgba(0,0,0,.10) 42%,rgba(255,255,255,.2) 58%,rgba(255,255,255,1) 100%)"></div>
<div class="a " style="left:65.20px;top:842.40px;width:29.20px;height:29.20px;border-radius:50%;background:radial-gradient(circle at 36% 30%,#8ea57a 0%,#3d5c26 18%,#2b4519 55%,#132207 100%)"></div>
<div class="tx" style="left:104.05px;top:860.00px;font-family:'Liberation Sans';font-weight:400;font-size:22px;color:#000;transform:scaleX(0.9469);-webkit-text-stroke:.2px #000;">FWTimeOutErr</div>
<div class="a " style="left:62.00px;top:881.20px;width:35.60px;height:35.60px;border-radius:50%;background:linear-gradient(135deg,rgba(0,0,0,.24) 0%,rgba(0,0,0,.10) 42%,rgba(255,255,255,.2) 58%,rgba(255,255,255,1) 100%)"></div>
<div class="a " style="left:65.20px;top:884.40px;width:29.20px;height:29.20px;border-radius:50%;background:radial-gradient(circle at 36% 30%,#8ea57a 0%,#3d5c26 18%,#2b4519 55%,#132207 100%)"></div>
<div class="tx" style="left:104.04px;top:902.00px;font-family:'Liberation Sans';font-weight:400;font-size:22px;color:#000;transform:scaleX(0.9550);-webkit-text-stroke:.2px #000;">FW Move</div>
<div class="a " style="left:62.00px;top:923.20px;width:35.60px;height:35.60px;border-radius:50%;background:linear-gradient(135deg,rgba(0,0,0,.24) 0%,rgba(0,0,0,.10) 42%,rgba(255,255,255,.2) 58%,rgba(255,255,255,1) 100%)"></div>
<div class="a " style="left:65.20px;top:926.40px;width:29.20px;height:29.20px;border-radius:50%;background:radial-gradient(circle at 36% 30%,#8ea57a 0%,#3d5c26 18%,#2b4519 55%,#132207 100%)"></div>
<div class="tx" style="left:104.09px;top:944.00px;font-family:'Liberation Sans';font-weight:400;font-size:22px;color:#000;transform:scaleX(0.9117);-webkit-text-stroke:.2px #000;">GRBusyErr</div>
<div class="a " style="left:62.00px;top:965.20px;width:35.60px;height:35.60px;border-radius:50%;background:linear-gradient(135deg,rgba(0,0,0,.24) 0%,rgba(0,0,0,.10) 42%,rgba(255,255,255,.2) 58%,rgba(255,255,255,1) 100%)"></div>
<div class="a " style="left:65.20px;top:968.40px;width:29.20px;height:29.20px;border-radius:50%;background:radial-gradient(circle at 36% 30%,#8ea57a 0%,#3d5c26 18%,#2b4519 55%,#132207 100%)"></div>
<div class="tx" style="left:104.04px;top:986.00px;font-family:'Liberation Sans';font-weight:400;font-size:22px;color:#000;transform:scaleX(0.9616);-webkit-text-stroke:.2px #000;">GRNotInitErr</div>
<div class="a " style="left:62.00px;top:1007.20px;width:35.60px;height:35.60px;border-radius:50%;background:linear-gradient(135deg,rgba(0,0,0,.24) 0%,rgba(0,0,0,.10) 42%,rgba(255,255,255,.2) 58%,rgba(255,255,255,1) 100%)"></div>
<div class="a " style="left:65.20px;top:1010.40px;width:29.20px;height:29.20px;border-radius:50%;background:radial-gradient(circle at 36% 30%,#8ea57a 0%,#3d5c26 18%,#2b4519 55%,#132207 100%)"></div>
<div class="tx" style="left:104.07px;top:1028.00px;font-family:'Liberation Sans';font-weight:400;font-size:22px;color:#000;transform:scaleX(0.9269);-webkit-text-stroke:.2px #000;">GRTimeOutErr</div>
<div class="a " style="left:62.00px;top:1049.20px;width:35.60px;height:35.60px;border-radius:50%;background:linear-gradient(135deg,rgba(0,0,0,.24) 0%,rgba(0,0,0,.10) 42%,rgba(255,255,255,.2) 58%,rgba(255,255,255,1) 100%)"></div>
<div class="a " style="left:65.20px;top:1052.40px;width:29.20px;height:29.20px;border-radius:50%;background:radial-gradient(circle at 36% 30%,#8ea57a 0%,#3d5c26 18%,#2b4519 55%,#132207 100%)"></div>
<div class="tx" style="left:104.03px;top:1070.00px;font-family:'Liberation Sans';font-weight:400;font-size:22px;color:#000;transform:scaleX(0.9685);-webkit-text-stroke:.2px #000;">Grating Move</div>
<div class="a " style="left:62.00px;top:1091.20px;width:35.60px;height:35.60px;border-radius:50%;background:linear-gradient(135deg,rgba(0,0,0,.24) 0%,rgba(0,0,0,.10) 42%,rgba(255,255,255,.2) 58%,rgba(255,255,255,1) 100%)"></div>
<div class="a " style="left:65.20px;top:1094.40px;width:29.20px;height:29.20px;border-radius:50%;background:radial-gradient(circle at 36% 30%,#8ea57a 0%,#3d5c26 18%,#2b4519 55%,#132207 100%)"></div>
<div class="tx" style="left:104.07px;top:1112.00px;font-family:'Liberation Sans';font-weight:400;font-size:22px;color:#000;transform:scaleX(0.9283);-webkit-text-stroke:.2px #000;">GRStageBusyErr</div>
<div class="a " style="left:62.00px;top:1133.20px;width:35.60px;height:35.60px;border-radius:50%;background:linear-gradient(135deg,rgba(0,0,0,.24) 0%,rgba(0,0,0,.10) 42%,rgba(255,255,255,.2) 58%,rgba(255,255,255,1) 100%)"></div>
<div class="a " style="left:65.20px;top:1136.40px;width:29.20px;height:29.20px;border-radius:50%;background:radial-gradient(circle at 36% 30%,#8ea57a 0%,#3d5c26 18%,#2b4519 55%,#132207 100%)"></div>
<div class="tx" style="left:104.03px;top:1154.00px;font-family:'Liberation Sans';font-weight:400;font-size:22px;color:#000;transform:scaleX(0.9672);-webkit-text-stroke:.2px #000;">GRStageNotInitErr</div>
<div class="a " style="left:62.00px;top:1175.20px;width:35.60px;height:35.60px;border-radius:50%;background:linear-gradient(135deg,rgba(0,0,0,.24) 0%,rgba(0,0,0,.10) 42%,rgba(255,255,255,.2) 58%,rgba(255,255,255,1) 100%)"></div>
<div class="a " style="left:65.20px;top:1178.40px;width:29.20px;height:29.20px;border-radius:50%;background:radial-gradient(circle at 36% 30%,#8ea57a 0%,#3d5c26 18%,#2b4519 55%,#132207 100%)"></div>
<div class="tx" style="left:104.07px;top:1196.00px;font-family:'Liberation Sans';font-weight:400;font-size:22px;color:#000;transform:scaleX(0.9345);-webkit-text-stroke:.2px #000;">GRStageTimeOutErr</div>
<div class="a " style="left:62.00px;top:1217.20px;width:35.60px;height:35.60px;border-radius:50%;background:linear-gradient(135deg,rgba(0,0,0,.24) 0%,rgba(0,0,0,.10) 42%,rgba(255,255,255,.2) 58%,rgba(255,255,255,1) 100%)"></div>
<div class="a " style="left:65.20px;top:1220.40px;width:29.20px;height:29.20px;border-radius:50%;background:radial-gradient(circle at 36% 30%,#8ea57a 0%,#3d5c26 18%,#2b4519 55%,#132207 100%)"></div>
<div class="tx" style="left:104.04px;top:1238.00px;font-family:'Liberation Sans';font-weight:400;font-size:22px;color:#000;transform:scaleX(0.9649);-webkit-text-stroke:.2px #000;">Grating Stage Move</div>
<div class="a " style="left:297.50px;top:597.50px;width:1003.10px;height:399.50px;box-sizing:border-box;border-style:solid;border-width:6.00px 8.10px 9.50px 6.00px;border-color:#a3a3a3 #efefef #f0f0f0 #a1a1a1;background:#b3b3b3;"></div>
<div class="a " style="left:297.50px;top:597.50px;width:1003.10px;height:6.00px;background:linear-gradient(180deg,#d9d9d9,#a9a9a9);clip-path:polygon(0 0,100% 0,calc(100% - 8.10px) 100%,6.00px 100%)"></div>
<div class="a " style="left:297.50px;top:597.50px;width:6.00px;height:399.50px;background:linear-gradient(90deg,#dadada,#ababab);clip-path:polygon(0 0,100% 6.00px,100% calc(100% - 9.50px),0 100%)"></div>
<div class="tx" style="left:406.90px;top:658.00px;font-family:'Liberation Sans';font-weight:400;font-size:22px;color:#000;transform:scaleX(0.9579);-webkit-text-stroke:.2px #000;">Axes</div>
<div class="tx" style="left:496.57px;top:631.75px;font-family:'Liberation Sans';font-weight:400;font-size:22px;color:#000;transform:scaleX(0.9320);-webkit-text-stroke:.2px #000;">Pos</div>
<div class="tx" style="left:496.61px;top:658.00px;font-family:'Liberation Sans';font-weight:400;font-size:22px;color:#000;transform:scaleX(0.8876);-webkit-text-stroke:.2px #000;">Lim</div>
<div class="tx" style="left:566.82px;top:631.75px;font-family:'Liberation Sans';font-weight:400;font-size:22px;color:#000;transform:scaleX(0.9837);-webkit-text-stroke:.2px #000;">Neg</div>
<div class="tx" style="left:566.91px;top:658.00px;font-family:'Liberation Sans';font-weight:400;font-size:22px;color:#000;transform:scaleX(0.8936);-webkit-text-stroke:.2px #000;">Lim</div>
<div class="tx" style="left:673.87px;top:658.00px;font-family:'Liberation Sans';font-weight:400;font-size:22px;color:#000;transform:scaleX(0.9277);-webkit-text-stroke:.2px #000;">Cur Pos</div>
<div class="tx" style="left:787.33px;top:658.00px;font-family:'Liberation Sans';font-weight:400;font-size:22px;color:#000;transform:scaleX(0.9740);-webkit-text-stroke:.2px #000;">Moving</div>
<div class="tx" style="left:870.30px;top:658.00px;font-family:'Liberation Sans';font-weight:400;font-size:22px;color:#000;transform:scaleX(1.0025);-webkit-text-stroke:.2px #000;">Initalizing</div>
<div class="tx" style="left:1005.05px;top:631.50px;font-family:'Liberation Sans';font-weight:400;font-size:22px;color:#000;transform:scaleX(0.9536);-webkit-text-stroke:.2px #000;">Cmded</div>
<div class="tx" style="left:1005.10px;top:658.00px;font-family:'Liberation Sans';font-weight:400;font-size:22px;color:#000;transform:scaleX(0.8968);-webkit-text-stroke:.2px #000;">Pos</div>
<div class="a " style="left:469.10px;top:673.50px;width:635.70px;height:188.70px;box-sizing:border-box;border-style:solid;border-width:7.80px 8.80px 8.40px 7.90px;border-color:#9a9a9a #bababa #bcbcbc #929292;background:#b3b3b3;"></div>
<div class="a " style="left:469.10px;top:673.50px;width:635.70px;height:7.80px;background:linear-gradient(180deg,#b0b0b0,#8f8f8f);clip-path:polygon(0 0,100% 0,calc(100% - 8.8px) 100%,7.9px 100%)"></div>
<div class="a " style="left:469.10px;top:673.50px;width:7.90px;height:180.30px;background:linear-gradient(90deg,#adadad,#8c8c8c);clip-path:polygon(0 0,100% 7.8px,100% 100%,0 100%)"></div>
<div class="a " style="left:477.00px;top:681.30px;width:619.00px;height:57.50px;box-sizing:border-box;border-style:solid;border-width:7.90px 0.00px 8.40px 8.00px;border-color:#868686 #b8b8b8 #bdbdbd #8a8a8a;background:#b8b8b8;"></div>
<div class="a " style="left:477.00px;top:681.30px;width:619.00px;height:7.90px;background:linear-gradient(180deg,#a4a4a4 0%,#8e8e8e 45%,#777777 100%);clip-path:polygon(0 0,100% 0,100% 100%,8px 100%)"></div>
<div class="tx" style="left:341.42px;top:713.90px;font-family:'Liberation Sans';font-weight:400;font-size:22px;color:#000;transform:scaleX(0.9821);-webkit-text-stroke:.2px #000;">Filter Wheel</div>
<div class="a " style="left:499.60px;top:691.50px;width:36.00px;height:36.00px;border-radius:50%;background:linear-gradient(135deg,rgba(0,0,0,.24) 0%,rgba(0,0,0,.10) 42%,rgba(255,255,255,.2) 58%,rgba(255,255,255,1) 100%)"></div>
<div class="a " style="left:502.80px;top:694.70px;width:29.60px;height:29.60px;border-radius:50%;background:radial-gradient(circle at 36% 30%,#8ea57a 0%,#3d5c26 18%,#2b4519 55%,#132207 100%)"></div>
<div class="a " style="left:573.30px;top:691.50px;width:36.00px;height:36.00px;border-radius:50%;background:linear-gradient(135deg,rgba(0,0,0,.24) 0%,rgba(0,0,0,.10) 42%,rgba(255,255,255,.2) 58%,rgba(255,255,255,1) 100%)"></div>
<div class="a " style="left:576.50px;top:694.70px;width:29.60px;height:29.60px;border-radius:50%;background:radial-gradient(circle at 36% 30%,#d8ffb8 0%,#92f95c 17%,#7aee44 55%,#5ac52e 100%)"></div>
<div class="a " style="left:809.80px;top:691.50px;width:36.00px;height:36.00px;border-radius:50%;background:linear-gradient(135deg,rgba(0,0,0,.24) 0%,rgba(0,0,0,.10) 42%,rgba(255,255,255,.2) 58%,rgba(255,255,255,1) 100%)"></div>
<div class="a " style="left:813.00px;top:694.70px;width:29.60px;height:29.60px;border-radius:50%;background:radial-gradient(circle at 36% 30%,#8ea57a 0%,#3d5c26 18%,#2b4519 55%,#132207 100%)"></div>
<div class="a " style="left:897.00px;top:691.50px;width:36.00px;height:36.00px;border-radius:50%;background:linear-gradient(135deg,rgba(0,0,0,.24) 0%,rgba(0,0,0,.10) 42%,rgba(255,255,255,.2) 58%,rgba(255,255,255,1) 100%)"></div>
<div class="a " style="left:900.20px;top:694.70px;width:29.60px;height:29.60px;border-radius:50%;background:radial-gradient(circle at 36% 30%,#8ea57a 0%,#3d5c26 18%,#2b4519 55%,#132207 100%)"></div>
<div class="a " style="left:652.80px;top:692.60px;width:133.60px;height:43.40px;box-sizing:border-box;border-style:solid;border-width:6.90px 7.60px 6.20px 6.00px;border-color:#8e8e8e #c1c1c1 #c3c3c3 #929292;background:#d6d6d6;"></div>
<div class="a " style="left:652.80px;top:692.60px;width:133.60px;height:6.90px;background:linear-gradient(180deg,#acacac,#868686);clip-path:polygon(0 0,100% 0,calc(100% - 7.60px) 100%,6.00px 100%)"></div>
<div class="a " style="left:652.80px;top:692.60px;width:6.00px;height:43.40px;background:linear-gradient(90deg,#aaaaaa,#8c8c8c);clip-path:polygon(0 0,100% 6.90px,100% calc(100% - 6.20px),0 100%)"></div>
<div class="a" style="left:658.8px;top:699.5px;width:116px;height:30.3px;overflow:hidden">
<div class="tx" style="left:4.60px;top:15.70px;font-family:'Liberation Sans';font-weight:400;font-size:22px;color:#000;transform:scaleX(0.9750);-webkit-text-stroke:.2px #000;">-283805000</div>
</div>
<div class="a " style="left:994.80px;top:692.60px;width:90.20px;height:43.40px;box-sizing:border-box;border-style:solid;border-width:4.60px 8.30px 9.20px 6.10px;border-color:#8e8e8e #c1c1c1 #c3c3c3 #929292;background:#d6d6d6;"></div>
<div class="a " style="left:994.80px;top:692.60px;width:90.20px;height:4.60px;background:linear-gradient(180deg,#acacac,#868686);clip-path:polygon(0 0,100% 0,calc(100% - 8.30px) 100%,6.10px 100%)"></div>
<div class="a " style="left:994.80px;top:692.60px;width:6.10px;height:43.40px;background:linear-gradient(90deg,#aaaaaa,#8c8c8c);clip-path:polygon(0 0,100% 4.60px,100% calc(100% - 9.20px),0 100%)"></div>
<div class="a" style="left:1000.9px;top:697.2px;width:72px;height:29.6px;overflow:hidden">
<div class="tx" style="left:4.33px;top:16.50px;font-family:'Liberation Sans';font-weight:400;font-size:22px;color:#000;transform:scaleX(0.9750);-webkit-text-stroke:.2px #000;">155000</div>
</div>
<div class="a " style="left:477.00px;top:738.80px;width:619.00px;height:57.50px;box-sizing:border-box;border-style:solid;border-width:7.90px 0.00px 8.40px 8.00px;border-color:#868686 #b8b8b8 #bdbdbd #8a8a8a;background:#b8b8b8;"></div>
<div class="a " style="left:477.00px;top:738.80px;width:619.00px;height:7.90px;background:linear-gradient(180deg,#a4a4a4 0%,#8e8e8e 45%,#777777 100%);clip-path:polygon(0 0,100% 0,100% 100%,8px 100%)"></div>
<div class="tx" style="left:319.73px;top:771.40px;font-family:'Liberation Sans';font-weight:400;font-size:22px;color:#000;transform:scaleX(0.9739);-webkit-text-stroke:.2px #000;">Grating Wheel</div>
<div class="a " style="left:499.60px;top:749.00px;width:36.00px;height:36.00px;border-radius:50%;background:linear-gradient(135deg,rgba(0,0,0,.24) 0%,rgba(0,0,0,.10) 42%,rgba(255,255,255,.2) 58%,rgba(255,255,255,1) 100%)"></div>
<div class="a " style="left:502.80px;top:752.20px;width:29.60px;height:29.60px;border-radius:50%;background:radial-gradient(circle at 36% 30%,#8ea57a 0%,#3d5c26 18%,#2b4519 55%,#132207 100%)"></div>
<div class="a " style="left:573.30px;top:749.00px;width:36.00px;height:36.00px;border-radius:50%;background:linear-gradient(135deg,rgba(0,0,0,.24) 0%,rgba(0,0,0,.10) 42%,rgba(255,255,255,.2) 58%,rgba(255,255,255,1) 100%)"></div>
<div class="a " style="left:576.50px;top:752.20px;width:29.60px;height:29.60px;border-radius:50%;background:radial-gradient(circle at 36% 30%,#d8ffb8 0%,#92f95c 17%,#7aee44 55%,#5ac52e 100%)"></div>
<div class="a " style="left:809.80px;top:749.00px;width:36.00px;height:36.00px;border-radius:50%;background:linear-gradient(135deg,rgba(0,0,0,.24) 0%,rgba(0,0,0,.10) 42%,rgba(255,255,255,.2) 58%,rgba(255,255,255,1) 100%)"></div>
<div class="a " style="left:813.00px;top:752.20px;width:29.60px;height:29.60px;border-radius:50%;background:radial-gradient(circle at 36% 30%,#8ea57a 0%,#3d5c26 18%,#2b4519 55%,#132207 100%)"></div>
<div class="a " style="left:897.00px;top:749.00px;width:36.00px;height:36.00px;border-radius:50%;background:linear-gradient(135deg,rgba(0,0,0,.24) 0%,rgba(0,0,0,.10) 42%,rgba(255,255,255,.2) 58%,rgba(255,255,255,1) 100%)"></div>
<div class="a " style="left:900.20px;top:752.20px;width:29.60px;height:29.60px;border-radius:50%;background:radial-gradient(circle at 36% 30%,#8ea57a 0%,#3d5c26 18%,#2b4519 55%,#132207 100%)"></div>
<div class="a " style="left:652.80px;top:750.10px;width:133.60px;height:43.40px;box-sizing:border-box;border-style:solid;border-width:6.90px 7.60px 6.20px 6.00px;border-color:#8e8e8e #c1c1c1 #c3c3c3 #929292;background:#d6d6d6;"></div>
<div class="a " style="left:652.80px;top:750.10px;width:133.60px;height:6.90px;background:linear-gradient(180deg,#acacac,#868686);clip-path:polygon(0 0,100% 0,calc(100% - 7.60px) 100%,6.00px 100%)"></div>
<div class="a " style="left:652.80px;top:750.10px;width:6.00px;height:43.40px;background:linear-gradient(90deg,#aaaaaa,#8c8c8c);clip-path:polygon(0 0,100% 6.90px,100% calc(100% - 6.20px),0 100%)"></div>
<div class="a" style="left:658.8px;top:757.0px;width:116px;height:30.3px;overflow:hidden">
<div class="tx" style="left:4.60px;top:15.70px;font-family:'Liberation Sans';font-weight:400;font-size:22px;color:#000;transform:scaleX(0.9750);-webkit-text-stroke:.2px #000;">-42771000</div>
</div>
<div class="a " style="left:994.80px;top:750.10px;width:90.20px;height:43.40px;box-sizing:border-box;border-style:solid;border-width:4.60px 8.30px 9.20px 6.10px;border-color:#8e8e8e #c1c1c1 #c3c3c3 #929292;background:#d6d6d6;"></div>
<div class="a " style="left:994.80px;top:750.10px;width:90.20px;height:4.60px;background:linear-gradient(180deg,#acacac,#868686);clip-path:polygon(0 0,100% 0,calc(100% - 8.30px) 100%,6.10px 100%)"></div>
<div class="a " style="left:994.80px;top:750.10px;width:6.10px;height:43.40px;background:linear-gradient(90deg,#aaaaaa,#8c8c8c);clip-path:polygon(0 0,100% 4.60px,100% calc(100% - 9.20px),0 100%)"></div>
<div class="a" style="left:1000.9px;top:754.7px;width:72px;height:29.6px;overflow:hidden">
<div class="tx" style="left:4.33px;top:16.50px;font-family:'Liberation Sans';font-weight:400;font-size:22px;color:#000;transform:scaleX(0.9750);-webkit-text-stroke:.2px #000;">159000</div>
</div>
<div class="a " style="left:477.00px;top:796.30px;width:619.00px;height:57.50px;box-sizing:border-box;border-style:solid;border-width:7.90px 0.00px 8.40px 8.00px;border-color:#868686 #b8b8b8 #bdbdbd #8a8a8a;background:#b8b8b8;"></div>
<div class="a " style="left:477.00px;top:796.30px;width:619.00px;height:7.90px;background:linear-gradient(180deg,#a4a4a4 0%,#8e8e8e 45%,#777777 100%);clip-path:polygon(0 0,100% 0,100% 100%,8px 100%)"></div>
<div class="tx" style="left:323.22px;top:828.90px;font-family:'Liberation Sans';font-weight:400;font-size:22px;color:#000;transform:scaleX(0.9783);-webkit-text-stroke:.2px #000;">Grating Stage</div>
<div class="a " style="left:499.60px;top:806.50px;width:36.00px;height:36.00px;border-radius:50%;background:linear-gradient(135deg,rgba(0,0,0,.24) 0%,rgba(0,0,0,.10) 42%,rgba(255,255,255,.2) 58%,rgba(255,255,255,1) 100%)"></div>
<div class="a " style="left:502.80px;top:809.70px;width:29.60px;height:29.60px;border-radius:50%;background:radial-gradient(circle at 36% 30%,#8ea57a 0%,#3d5c26 18%,#2b4519 55%,#132207 100%)"></div>
<div class="a " style="left:573.30px;top:806.50px;width:36.00px;height:36.00px;border-radius:50%;background:linear-gradient(135deg,rgba(0,0,0,.24) 0%,rgba(0,0,0,.10) 42%,rgba(255,255,255,.2) 58%,rgba(255,255,255,1) 100%)"></div>
<div class="a " style="left:576.50px;top:809.70px;width:29.60px;height:29.60px;border-radius:50%;background:radial-gradient(circle at 36% 30%,#8ea57a 0%,#3d5c26 18%,#2b4519 55%,#132207 100%)"></div>
<div class="a " style="left:809.80px;top:806.50px;width:36.00px;height:36.00px;border-radius:50%;background:linear-gradient(135deg,rgba(0,0,0,.24) 0%,rgba(0,0,0,.10) 42%,rgba(255,255,255,.2) 58%,rgba(255,255,255,1) 100%)"></div>
<div class="a " style="left:813.00px;top:809.70px;width:29.60px;height:29.60px;border-radius:50%;background:radial-gradient(circle at 36% 30%,#8ea57a 0%,#3d5c26 18%,#2b4519 55%,#132207 100%)"></div>
<div class="a " style="left:897.00px;top:806.50px;width:36.00px;height:36.00px;border-radius:50%;background:linear-gradient(135deg,rgba(0,0,0,.24) 0%,rgba(0,0,0,.10) 42%,rgba(255,255,255,.2) 58%,rgba(255,255,255,1) 100%)"></div>
<div class="a " style="left:900.20px;top:809.70px;width:29.60px;height:29.60px;border-radius:50%;background:radial-gradient(circle at 36% 30%,#8ea57a 0%,#3d5c26 18%,#2b4519 55%,#132207 100%)"></div>
<div class="a " style="left:652.80px;top:807.60px;width:133.60px;height:43.40px;box-sizing:border-box;border-style:solid;border-width:6.90px 7.60px 6.20px 6.00px;border-color:#8e8e8e #c1c1c1 #c3c3c3 #929292;background:#d6d6d6;"></div>
<div class="a " style="left:652.80px;top:807.60px;width:133.60px;height:6.90px;background:linear-gradient(180deg,#acacac,#868686);clip-path:polygon(0 0,100% 0,calc(100% - 7.60px) 100%,6.00px 100%)"></div>
<div class="a " style="left:652.80px;top:807.60px;width:6.00px;height:43.40px;background:linear-gradient(90deg,#aaaaaa,#8c8c8c);clip-path:polygon(0 0,100% 6.90px,100% calc(100% - 6.20px),0 100%)"></div>
<div class="a" style="left:658.8px;top:814.5px;width:116px;height:30.3px;overflow:hidden">
<div class="tx" style="left:3.63px;top:15.70px;font-family:'Liberation Sans';font-weight:400;font-size:22px;color:#000;transform:scaleX(0.9750);-webkit-text-stroke:.2px #000;">143</div>
</div>
<div class="a " style="left:994.80px;top:807.60px;width:90.20px;height:43.40px;box-sizing:border-box;border-style:solid;border-width:4.60px 8.30px 9.20px 6.10px;border-color:#8e8e8e #c1c1c1 #c3c3c3 #929292;background:#d6d6d6;"></div>
<div class="a " style="left:994.80px;top:807.60px;width:90.20px;height:4.60px;background:linear-gradient(180deg,#acacac,#868686);clip-path:polygon(0 0,100% 0,calc(100% - 8.30px) 100%,6.10px 100%)"></div>
<div class="a " style="left:994.80px;top:807.60px;width:6.10px;height:43.40px;background:linear-gradient(90deg,#aaaaaa,#8c8c8c);clip-path:polygon(0 0,100% 4.60px,100% calc(100% - 9.20px),0 100%)"></div>
<div class="a" style="left:1000.9px;top:812.2px;width:72px;height:29.6px;overflow:hidden">
<div class="tx" style="left:5.30px;top:16.50px;font-family:'Liberation Sans';font-weight:400;font-size:22px;color:#000;transform:scaleX(0.9750);-webkit-text-stroke:.2px #000;">80</div>
</div>
<div class="a " style="left:1244.50px;top:657.10px;width:29.00px;height:29.00px;border-radius:50%;background:linear-gradient(135deg,rgba(0,0,0,.24) 0%,rgba(0,0,0,.10) 42%,rgba(255,255,255,.2) 58%,rgba(255,255,255,1) 100%)"></div>
<div class="a " style="left:1247.70px;top:660.30px;width:22.60px;height:22.60px;border-radius:50%;background:radial-gradient(circle at 36% 30%,#d8ffb8 0%,#92f95c 17%,#7aee44 55%,#5ac52e 100%)"></div>
<div class="tx" style="left:1132.85px;top:671.90px;font-family:'Liberation Sans';font-weight:400;font-size:22px;color:#000;transform:scaleX(0.9517);-webkit-text-stroke:.2px #000;">FilterHome</div>
<div class="a " style="left:1244.50px;top:691.50px;width:29.00px;height:29.00px;border-radius:50%;background:linear-gradient(135deg,rgba(0,0,0,.24) 0%,rgba(0,0,0,.10) 42%,rgba(255,255,255,.2) 58%,rgba(255,255,255,1) 100%)"></div>
<div class="a " style="left:1247.70px;top:694.70px;width:22.60px;height:22.60px;border-radius:50%;background:radial-gradient(circle at 36% 30%,#8ea57a 0%,#3d5c26 18%,#2b4519 55%,#132207 100%)"></div>
<div class="tx" style="left:1151.74px;top:706.30px;font-family:'Liberation Sans';font-weight:400;font-size:22px;color:#000;transform:scaleX(0.9619);-webkit-text-stroke:.2px #000;">FilterBit0</div>
<div class="a " style="left:1244.50px;top:725.90px;width:29.00px;height:29.00px;border-radius:50%;background:linear-gradient(135deg,rgba(0,0,0,.24) 0%,rgba(0,0,0,.10) 42%,rgba(255,255,255,.2) 58%,rgba(255,255,255,1) 100%)"></div>
<div class="a " style="left:1247.70px;top:729.10px;width:22.60px;height:22.60px;border-radius:50%;background:radial-gradient(circle at 36% 30%,#8ea57a 0%,#3d5c26 18%,#2b4519 55%,#132207 100%)"></div>
<div class="tx" style="left:1151.74px;top:740.70px;font-family:'Liberation Sans';font-weight:400;font-size:22px;color:#000;transform:scaleX(0.9619);-webkit-text-stroke:.2px #000;">FilterBit1</div>
<div class="a " style="left:1244.50px;top:760.30px;width:29.00px;height:29.00px;border-radius:50%;background:linear-gradient(135deg,rgba(0,0,0,.24) 0%,rgba(0,0,0,.10) 42%,rgba(255,255,255,.2) 58%,rgba(255,255,255,1) 100%)"></div>
<div class="a " style="left:1247.70px;top:763.50px;width:22.60px;height:22.60px;border-radius:50%;background:radial-gradient(circle at 36% 30%,#d8ffb8 0%,#92f95c 17%,#7aee44 55%,#5ac52e 100%)"></div>
<div class="tx" style="left:1111.55px;top:775.10px;font-family:'Liberation Sans';font-weight:400;font-size:22px;color:#000;transform:scaleX(0.9453);-webkit-text-stroke:.2px #000;">GratingHome</div>
<div class="a " style="left:1244.50px;top:794.70px;width:29.00px;height:29.00px;border-radius:50%;background:linear-gradient(135deg,rgba(0,0,0,.24) 0%,rgba(0,0,0,.10) 42%,rgba(255,255,255,.2) 58%,rgba(255,255,255,1) 100%)"></div>
<div class="a " style="left:1247.70px;top:797.90px;width:22.60px;height:22.60px;border-radius:50%;background:radial-gradient(circle at 36% 30%,#8ea57a 0%,#3d5c26 18%,#2b4519 55%,#132207 100%)"></div>
<div class="tx" style="left:1129.24px;top:809.50px;font-family:'Liberation Sans';font-weight:400;font-size:22px;color:#000;transform:scaleX(0.9631);-webkit-text-stroke:.2px #000;">GratingBit0</div>
<div class="a " style="left:1244.50px;top:829.10px;width:29.00px;height:29.00px;border-radius:50%;background:linear-gradient(135deg,rgba(0,0,0,.24) 0%,rgba(0,0,0,.10) 42%,rgba(255,255,255,.2) 58%,rgba(255,255,255,1) 100%)"></div>
<div class="a " style="left:1247.70px;top:832.30px;width:22.60px;height:22.60px;border-radius:50%;background:radial-gradient(circle at 36% 30%,#8ea57a 0%,#3d5c26 18%,#2b4519 55%,#132207 100%)"></div>
<div class="tx" style="left:1129.24px;top:843.90px;font-family:'Liberation Sans';font-weight:400;font-size:22px;color:#000;transform:scaleX(0.9631);-webkit-text-stroke:.2px #000;">GratingBit1</div>
<div class="tx" style="left:341.01px;top:893.50px;font-family:'Liberation Sans';font-weight:400;font-size:22px;color:#000;transform:scaleX(0.9855);-webkit-text-stroke:.2px #000;">Last Update</div>
<div class="a " style="left:466.00px;top:878.20px;width:188.20px;height:47.00px;box-sizing:border-box;border-style:solid;border-width:6.60px 6.60px 6.60px 6.50px;border-color:#8e8e8e #c1c1c1 #c3c3c3 #929292;background:#d6d6d6;"></div>
<div class="a " style="left:466.00px;top:878.20px;width:188.20px;height:6.60px;background:linear-gradient(180deg,#acacac,#868686);clip-path:polygon(0 0,100% 0,calc(100% - 6.60px) 100%,6.50px 100%)"></div>
<div class="a " style="left:466.00px;top:878.20px;width:6.50px;height:47.00px;background:linear-gradient(90deg,#aaaaaa,#8c8c8c);clip-path:polygon(0 0,100% 6.60px,100% calc(100% - 6.60px),0 100%)"></div>
<div class="tx" style="left:477.50px;top:903.40px;font-family:'Liberation Sans';font-weight:400;font-size:22px;color:#000;transform:scaleX(0.9706);-webkit-text-stroke:.2px #000;">02:31:14.2</div>
<div class="tx" style="left:437.74px;top:952.00px;font-family:'Liberation Sans';font-weight:400;font-size:22px;color:#000;transform:scaleX(0.9631);-webkit-text-stroke:.2px #000;">Enc Status</div>
<div class="a " style="left:547.70px;top:928.50px;width:106.50px;height:47.10px;box-sizing:border-box;border-style:solid;border-width:6.50px 6.60px 6.60px 6.60px;border-color:#8e8e8e #c1c1c1 #c3c3c3 #929292;background:#d6d6d6;"></div>
<div class="a " style="left:547.70px;top:928.50px;width:106.50px;height:6.50px;background:linear-gradient(180deg,#acacac,#868686);clip-path:polygon(0 0,100% 0,calc(100% - 6.60px) 100%,6.60px 100%)"></div>
<div class="a " style="left:547.70px;top:928.50px;width:6.60px;height:47.10px;background:linear-gradient(90deg,#aaaaaa,#8c8c8c);clip-path:polygon(0 0,100% 6.50px,100% calc(100% - 6.60px),0 100%)"></div>
<div class="a " style="left:554.30px;top:935.00px;width:12.40px;height:34.00px;background:#7888a6"></div>
<div class="tx" style="left:556.50px;top:952.00px;font-family:'Liberation Sans';font-weight:400;font-size:16px;color:#e8ecf5;">x</div>
<div class="tx" style="left:570.80px;top:953.00px;font-family:'Liberation Sans';font-weight:400;font-size:22px;color:#000;transform:scaleX(0.9295);-webkit-text-stroke:.2px #000;">401</div>
<div class="tx" style="left:849.44px;top:901.60px;font-family:'Liberation Sans';font-weight:400;font-size:22px;color:#000;transform:scaleX(0.9614);-webkit-text-stroke:.2px #000;">Grating Stage Position (mm)</div>
<div class="a " style="left:1121.40px;top:878.60px;width:151.10px;height:42.80px;box-sizing:border-box;border-style:solid;border-width:6.40px 7.50px 6.40px 7.60px;border-color:#8e8e8e #c1c1c1 #c3c3c3 #929292;background:#d6d6d6;"></div>
<div class="a " style="left:1121.40px;top:878.60px;width:151.10px;height:6.40px;background:linear-gradient(180deg,#acacac,#868686);clip-path:polygon(0 0,100% 0,calc(100% - 7.50px) 100%,7.60px 100%)"></div>
<div class="a " style="left:1121.40px;top:878.60px;width:7.60px;height:42.80px;background:linear-gradient(90deg,#aaaaaa,#8c8c8c);clip-path:polygon(0 0,100% 6.40px,100% calc(100% - 6.40px),0 100%)"></div>
<div class="tx" style="left:1130.99px;top:901.60px;font-family:'Liberation Sans';font-weight:400;font-size:22px;color:#000;transform:scaleX(1.0068);-webkit-text-stroke:.2px #000;">67.000</div>
<div class="tx" style="left:851.54px;top:951.00px;font-family:'Liberation Sans';font-weight:400;font-size:22px;color:#000;transform:scaleX(0.9632);-webkit-text-stroke:.2px #000;">Grating Stage Enocder</div>
<div class="a " style="left:1073.20px;top:929.00px;width:199.30px;height:42.80px;box-sizing:border-box;border-style:solid;border-width:6.40px 7.50px 7.50px 7.50px;border-color:#8e8e8e #c1c1c1 #c3c3c3 #929292;background:#d6d6d6;"></div>
<div class="a " style="left:1073.20px;top:929.00px;width:199.30px;height:6.40px;background:linear-gradient(180deg,#acacac,#868686);clip-path:polygon(0 0,100% 0,calc(100% - 7.50px) 100%,7.50px 100%)"></div>
<div class="a " style="left:1073.20px;top:929.00px;width:7.50px;height:42.80px;background:linear-gradient(90deg,#aaaaaa,#8c8c8c);clip-path:polygon(0 0,100% 6.40px,100% calc(100% - 7.50px),0 100%)"></div>
<div class="tx" style="left:1085.03px;top:951.00px;font-family:'Liberation Sans';font-weight:400;font-size:22px;color:#000;transform:scaleX(0.9726);-webkit-text-stroke:.2px #000;">13133310473</div>
<div class="tx" style="left:337.40px;top:1011.60px;font-family:'Liberation Sans';font-weight:400;font-size:22px;color:#000;-webkit-text-stroke:.2px #000;">HostPort</div>
<svg class="a" style="left:315.00px;top:1023.00px" width="23.80" height="48.00" viewBox="0 0 23.80 48.00">
<ellipse cx="11.90" cy="24.00" rx="10.90" ry="23.00" fill="url(#spg)"/>
<path d="M22.13 16.80 A10.90 23.00 0 0 1 4.76 43.20" stroke="#3c3c3c" stroke-width="1.6" fill="none" stroke-dasharray="1.6 1.4"/>
<path d="M2.86 23.04H20.47" stroke="#a0a0a0" stroke-width="1.3"/>
<path d="M2.86 24.72H20.47" stroke="#ececec" stroke-width="1.1"/>
<path d="M9.04 19.20L12.38 10.56" stroke="#222" stroke-width="1.9"/>
<path d="M12.38 11.52L15.71 19.20" stroke="#f2f2f2" stroke-width="1.4"/>
<path d="M8.57 28.80H14.76M10.47 28.80L11.19 36.48" stroke="#2a2a2a" stroke-width="1.9"/>
</svg>
<div class="a " style="left:337.50px;top:1025.30px;width:108.10px;height:46.30px;box-sizing:border-box;border-style:solid;border-width:7.80px 8.10px 8.80px 7.50px;border-color:#b4b4b4 #eeeeee #efefef #adadad;background:#fafafa;"></div>
<div class="a " style="left:337.50px;top:1025.30px;width:108.10px;height:7.80px;background:linear-gradient(180deg,#cfcfcf,#a2a2a2);clip-path:polygon(0 0,100% 0,calc(100% - 8.10px) 100%,7.50px 100%)"></div>
<div class="a " style="left:337.50px;top:1025.30px;width:7.50px;height:46.30px;background:linear-gradient(90deg,#c8c8c8,#a4a4a4);clip-path:polygon(0 0,100% 7.80px,100% calc(100% - 8.80px),0 100%)"></div>
<div class="tx" style="left:348.03px;top:1050.00px;font-family:'Liberation Sans';font-weight:400;font-size:22px;color:#000;transform:scaleX(0.9747);-webkit-text-stroke:.2px #000;">9999</div>
<div class="tx" style="left:524.92px;top:1013.00px;font-family:'Liberation Sans';font-weight:400;font-size:22px;color:#000;transform:scaleX(0.9797);-webkit-text-stroke:.2px #000;">Host Timeout (S)</div>
<svg class="a" style="left:503.60px;top:1025.70px" width="24.10" height="50.90" viewBox="0 0 24.10 50.90">
<ellipse cx="12.05" cy="25.45" rx="11.05" ry="24.45" fill="url(#spg)"/>
<path d="M22.41 17.81 A11.05 24.45 0 0 1 4.82 45.81" stroke="#3c3c3c" stroke-width="1.6" fill="none" stroke-dasharray="1.6 1.4"/>
<path d="M2.89 24.43H20.73" stroke="#a0a0a0" stroke-width="1.3"/>
<path d="M2.89 26.21H20.73" stroke="#ececec" stroke-width="1.1"/>
<path d="M9.16 20.36L12.53 11.20" stroke="#222" stroke-width="1.9"/>
<path d="M12.53 12.22L15.91 20.36" stroke="#f2f2f2" stroke-width="1.4"/>
<path d="M8.68 30.54H14.94M10.60 30.54L11.33 38.68" stroke="#2a2a2a" stroke-width="1.9"/>
</svg>
<div class="a " style="left:525.00px;top:1028.40px;width:108.00px;height:48.20px;box-sizing:border-box;border-style:solid;border-width:6.20px 7.00px 7.10px 7.00px;border-color:#b4b4b4 #eeeeee #efefef #adadad;background:#fafafa;"></div>
<div class="a " style="left:525.00px;top:1028.40px;width:108.00px;height:6.20px;background:linear-gradient(180deg,#cfcfcf,#a2a2a2);clip-path:polygon(0 0,100% 0,calc(100% - 7.00px) 100%,7.00px 100%)"></div>
<div class="a " style="left:525.00px;top:1028.40px;width:7.00px;height:48.20px;background:linear-gradient(90deg,#c8c8c8,#a4a4a4);clip-path:polygon(0 0,100% 6.20px,100% calc(100% - 7.10px),0 100%)"></div>
<div class="tx" style="left:536.46px;top:1053.50px;font-family:'Liberation Sans';font-weight:400;font-size:22px;color:#000;transform:scaleX(1.0372);-webkit-text-stroke:.2px #000;">10</div>
<div class="tx" style="left:318.75px;top:1103.50px;font-family:'Liberation Sans';font-weight:400;font-size:22px;color:#000;transform:scaleX(0.9823);-webkit-text-stroke:.2px #000;">AxisPort</div>
<div class="a " style="left:316.25px;top:1118.60px;width:206.65px;height:48.10px;box-sizing:border-box;border-style:solid;border-width:6.40px 8.20px 8.10px 2.35px;border-color:#b4b4b4 #eeeeee #efefef #adadad;background:#fff;"></div>
<div class="a " style="left:316.25px;top:1118.60px;width:206.65px;height:6.40px;background:linear-gradient(180deg,#cfcfcf,#a2a2a2);clip-path:polygon(0 0,100% 0,calc(100% - 8.20px) 100%,2.35px 100%)"></div>
<div class="a " style="left:316.25px;top:1118.60px;width:2.35px;height:48.10px;background:linear-gradient(90deg,#c8c8c8,#a4a4a4);clip-path:polygon(0 0,100% 6.40px,100% calc(100% - 8.10px),0 100%)"></div>
<div class="a " style="left:318.60px;top:1125.00px;width:22.60px;height:33.00px;background:#b9b9b9"></div>
<svg class="a" style="left:320px;top:1127px" width="22" height="30"><path d="M4 2h6M7 2v10M4 12h6" stroke="#000" stroke-width="1.8"/><path d="M2 20 L18 8" stroke="#000" stroke-width="1.8"/><ellipse cx="14" cy="22.5" rx="3.3" ry="5" stroke="#000" stroke-width="1.8" fill="none"/></svg>
<div class="tx" style="left:347.00px;top:1143.50px;font-family:'Liberation Sans';font-weight:400;font-size:22px;color:#000;transform:scaleX(0.9009);-webkit-text-stroke:.2px #000;">ASRL2:</div>
<div class="a " style="left:481.70px;top:1127.30px;width:33.00px;height:31.30px;box-sizing:border-box;border-style:solid;border-width:0.00px 2.00px 2.00px 0.00px;border-color:#a9a9a9 #707070 #8a8a8a #a9a9a9;background:#a9a9a9;"></div>
<svg class="a" style="left:488px;top:1136px" width="20" height="12"><path d="M1 1H19L10 11Z" fill="#000"/></svg>
<div class="tx" style="left:315.86px;top:1195.70px;font-family:'Liberation Sans';font-weight:400;font-size:22px;color:#000;transform:scaleX(0.9404);-webkit-text-stroke:.2px #000;">FPGA Loop Rate (uS)</div>
<svg class="a" style="left:315.70px;top:1212.00px" width="23.20" height="46.40" viewBox="0 0 23.20 46.40">
<ellipse cx="11.60" cy="23.20" rx="10.60" ry="22.20" fill="url(#spg)"/>
<path d="M21.58 16.24 A10.60 22.20 0 0 1 4.64 41.76" stroke="#3c3c3c" stroke-width="1.6" fill="none" stroke-dasharray="1.6 1.4"/>
<path d="M2.78 22.27H19.95" stroke="#a0a0a0" stroke-width="1.3"/>
<path d="M2.78 23.90H19.95" stroke="#ececec" stroke-width="1.1"/>
<path d="M8.82 18.56L12.06 10.21" stroke="#222" stroke-width="1.9"/>
<path d="M12.06 11.14L15.31 18.56" stroke="#f2f2f2" stroke-width="1.4"/>
<path d="M8.35 27.84H14.38M10.21 27.84L10.90 35.26" stroke="#2a2a2a" stroke-width="1.9"/>
</svg>
<div class="a " style="left:338.30px;top:1215.00px;width:106.70px;height:44.00px;box-sizing:border-box;border-style:solid;border-width:5.70px 7.50px 8.10px 7.00px;border-color:#b4b4b4 #eeeeee #efefef #adadad;background:#fafafa;"></div>
<div class="a " style="left:338.30px;top:1215.00px;width:106.70px;height:5.70px;background:linear-gradient(180deg,#cfcfcf,#a2a2a2);clip-path:polygon(0 0,100% 0,calc(100% - 7.50px) 100%,7.00px 100%)"></div>
<div class="a " style="left:338.30px;top:1215.00px;width:7.00px;height:44.00px;background:linear-gradient(90deg,#c8c8c8,#a4a4a4);clip-path:polygon(0 0,100% 5.70px,100% calc(100% - 8.10px),0 100%)"></div>
<div class="tx" style="left:349.56px;top:1237.50px;font-family:'Liberation Sans';font-weight:400;font-size:22px;color:#000;transform:scaleX(0.9370);-webkit-text-stroke:.2px #000;">1000</div>
<div class="tx" style="left:337.33px;top:1301.40px;font-family:'Liberation Sans';font-weight:400;font-size:22px;color:#000;transform:scaleX(0.9665);-webkit-text-stroke:.2px #000;">FW Move Timeout (S)</div>
<svg class="a" style="left:315.00px;top:1313.70px" width="23.90" height="46.30" viewBox="0 0 23.90 46.30">
<ellipse cx="11.95" cy="23.15" rx="10.95" ry="22.15" fill="url(#spg)"/>
<path d="M22.23 16.20 A10.95 22.15 0 0 1 4.78 41.67" stroke="#3c3c3c" stroke-width="1.6" fill="none" stroke-dasharray="1.6 1.4"/>
<path d="M2.87 22.22H20.55" stroke="#a0a0a0" stroke-width="1.3"/>
<path d="M2.87 23.84H20.55" stroke="#ececec" stroke-width="1.1"/>
<path d="M9.08 18.52L12.43 10.19" stroke="#222" stroke-width="1.9"/>
<path d="M12.43 11.11L15.77 18.52" stroke="#f2f2f2" stroke-width="1.4"/>
<path d="M8.60 27.78H14.82M10.52 27.78L11.23 35.19" stroke="#2a2a2a" stroke-width="1.9"/>
</svg>
<div class="a " style="left:338.30px;top:1316.00px;width:106.70px;height:44.70px;box-sizing:border-box;border-style:solid;border-width:6.40px 7.50px 8.20px 7.00px;border-color:#b4b4b4 #eeeeee #efefef #adadad;background:#fafafa;"></div>
<div class="a " style="left:338.30px;top:1316.00px;width:106.70px;height:6.40px;background:linear-gradient(180deg,#cfcfcf,#a2a2a2);clip-path:polygon(0 0,100% 0,calc(100% - 7.50px) 100%,7.00px 100%)"></div>
<div class="a " style="left:338.30px;top:1316.00px;width:7.00px;height:44.70px;background:linear-gradient(90deg,#c8c8c8,#a4a4a4);clip-path:polygon(0 0,100% 6.40px,100% calc(100% - 8.20px),0 100%)"></div>
<div class="tx" style="left:347.78px;top:1339.70px;font-family:'Liberation Sans';font-weight:400;font-size:22px;color:#000;transform:scaleX(0.9748);-webkit-text-stroke:.2px #000;">60</div>
<div class="tx" style="left:337.36px;top:1385.60px;font-family:'Liberation Sans';font-weight:400;font-size:22px;color:#000;transform:scaleX(0.9413);-webkit-text-stroke:.2px #000;">FW Dwell (mS)</div>
<svg class="a" style="left:315.00px;top:1397.80px" width="23.90" height="46.20" viewBox="0 0 23.90 46.20">
<ellipse cx="11.95" cy="23.10" rx="10.95" ry="22.10" fill="url(#spg)"/>
<path d="M22.23 16.17 A10.95 22.10 0 0 1 4.78 41.58" stroke="#3c3c3c" stroke-width="1.6" fill="none" stroke-dasharray="1.6 1.4"/>
<path d="M2.87 22.18H20.55" stroke="#a0a0a0" stroke-width="1.3"/>
<path d="M2.87 23.79H20.55" stroke="#ececec" stroke-width="1.1"/>
<path d="M9.08 18.48L12.43 10.16" stroke="#222" stroke-width="1.9"/>
<path d="M12.43 11.09L15.77 18.48" stroke="#f2f2f2" stroke-width="1.4"/>
<path d="M8.60 27.72H14.82M10.52 27.72L11.23 35.11" stroke="#2a2a2a" stroke-width="1.9"/>
</svg>
<div class="a " style="left:338.30px;top:1400.00px;width:106.70px;height:44.70px;box-sizing:border-box;border-style:solid;border-width:6.50px 7.50px 8.20px 7.00px;border-color:#b4b4b4 #eeeeee #efefef #adadad;background:#fafafa;"></div>
<div class="a " style="left:338.30px;top:1400.00px;width:106.70px;height:6.50px;background:linear-gradient(180deg,#cfcfcf,#a2a2a2);clip-path:polygon(0 0,100% 0,calc(100% - 7.50px) 100%,7.00px 100%)"></div>
<div class="a " style="left:338.30px;top:1400.00px;width:7.00px;height:44.70px;background:linear-gradient(90deg,#c8c8c8,#a4a4a4);clip-path:polygon(0 0,100% 6.50px,100% calc(100% - 8.20px),0 100%)"></div>
<div class="tx" style="left:349.58px;top:1423.30px;font-family:'Liberation Sans';font-weight:400;font-size:22px;color:#000;transform:scaleX(0.9162);-webkit-text-stroke:.2px #000;">100</div>
<div class="tx" style="left:315.75px;top:1486.20px;font-family:'Liberation Sans';font-weight:400;font-size:22px;color:#000;transform:scaleX(0.9526);-webkit-text-stroke:.2px #000;">Chassis Temp (C)</div>
<div class="a " style="left:316.00px;top:1501.80px;width:178.00px;height:45.00px;box-sizing:border-box;border-style:solid;border-width:6.40px 6.50px 8.60px 6.50px;border-color:#b2b2b2 #eeeeee #efefef #ababab;background:#d3d3d3;"></div>
<div class="a " style="left:316.00px;top:1501.80px;width:178.00px;height:6.40px;background:linear-gradient(180deg,#cfcfcf,#a2a2a2);clip-path:polygon(0 0,100% 0,calc(100% - 6.50px) 100%,6.50px 100%)"></div>
<div class="a " style="left:316.00px;top:1501.80px;width:6.50px;height:45.00px;background:linear-gradient(90deg,#c8c8c8,#a4a4a4);clip-path:polygon(0 0,100% 6.40px,100% calc(100% - 8.60px),0 100%)"></div>
<div class="tx" style="left:328.00px;top:1524.80px;font-family:'Liberation Sans';font-weight:400;font-size:22px;color:#000;transform:scaleX(1.0028);-webkit-text-stroke:.2px #000;">17.2</div>
<div class="tx" style="left:315.74px;top:1573.00px;font-family:'Liberation Sans';font-weight:400;font-size:22px;color:#000;transform:scaleX(0.9601);-webkit-text-stroke:.2px #000;">Grating Stage Encoder</div>
<div class="a " style="left:316.00px;top:1589.60px;width:198.30px;height:44.00px;box-sizing:border-box;border-style:solid;border-width:6.40px 6.50px 7.60px 6.50px;border-color:#b2b2b2 #eeeeee #efefef #ababab;background:#d3d3d3;"></div>
<div class="a " style="left:316.00px;top:1589.60px;width:198.30px;height:6.40px;background:linear-gradient(180deg,#cfcfcf,#a2a2a2);clip-path:polygon(0 0,100% 0,calc(100% - 6.50px) 100%,6.50px 100%)"></div>
<div class="a " style="left:316.00px;top:1589.60px;width:6.50px;height:44.00px;background:linear-gradient(90deg,#c8c8c8,#a4a4a4);clip-path:polygon(0 0,100% 6.40px,100% calc(100% - 7.60px),0 100%)"></div>
<div class="tx" style="left:328.04px;top:1612.60px;font-family:'Liberation Sans';font-weight:400;font-size:22px;color:#000;transform:scaleX(0.9636);-webkit-text-stroke:.2px #000;">13133310529</div>
<div class="tx" style="left:575.44px;top:1546.70px;font-family:'Liberation Sans';font-weight:400;font-size:22px;color:#000;transform:scaleX(0.9563);-webkit-text-stroke:.2px #000;">Grating Stage Home</div>
<div class="tx" style="left:591.55px;top:1570.90px;font-family:'Liberation Sans';font-weight:400;font-size:22px;color:#000;transform:scaleX(0.9538);-webkit-text-stroke:.2px #000;">Encoder Position</div>
<svg class="a" style="left:551.80px;top:1587.50px" width="23.50" height="47.10" viewBox="0 0 23.50 47.10">
<ellipse cx="11.75" cy="23.55" rx="10.75" ry="22.55" fill="url(#spg)"/>
<path d="M21.86 16.48 A10.75 22.55 0 0 1 4.70 42.39" stroke="#3c3c3c" stroke-width="1.6" fill="none" stroke-dasharray="1.6 1.4"/>
<path d="M2.82 22.61H20.21" stroke="#a0a0a0" stroke-width="1.3"/>
<path d="M2.82 24.26H20.21" stroke="#ececec" stroke-width="1.1"/>
<path d="M8.93 18.84L12.22 10.36" stroke="#222" stroke-width="1.9"/>
<path d="M12.22 11.30L15.51 18.84" stroke="#f2f2f2" stroke-width="1.4"/>
<path d="M8.46 28.26H14.57M10.34 28.26L11.04 35.80" stroke="#2a2a2a" stroke-width="1.9"/>
</svg>
<div class="a " style="left:574.30px;top:1590.70px;width:198.20px;height:42.90px;box-sizing:border-box;border-style:solid;border-width:5.30px 7.50px 7.60px 6.40px;border-color:#b4b4b4 #eeeeee #efefef #adadad;background:#fafafa;"></div>
<div class="a " style="left:574.30px;top:1590.70px;width:198.20px;height:5.30px;background:linear-gradient(180deg,#cfcfcf,#a2a2a2);clip-path:polygon(0 0,100% 0,calc(100% - 7.50px) 100%,6.40px 100%)"></div>
<div class="a " style="left:574.30px;top:1590.70px;width:6.40px;height:42.90px;background:linear-gradient(90deg,#c8c8c8,#a4a4a4);clip-path:polygon(0 0,100% 5.30px,100% calc(100% - 7.60px),0 100%)"></div>
<div class="tx" style="left:586.03px;top:1612.60px;font-family:'Liberation Sans';font-weight:400;font-size:22px;color:#000;transform:scaleX(0.9651);-webkit-text-stroke:.2px #000;">10885161687</div>
<div class="tx" style="left:315.73px;top:1656.60px;font-family:'Liberation Sans';font-weight:400;font-size:22px;color:#000;transform:scaleX(0.9696);-webkit-text-stroke:.2px #000;">Digital Status</div>
<div class="a " style="left:316.00px;top:1672.00px;width:438.30px;height:44.00px;box-sizing:border-box;border-style:solid;border-width:6.60px 6.50px 8.00px 6.50px;border-color:#b2b2b2 #eeeeee #efefef #ababab;background:#d3d3d3;"></div>
<div class="a " style="left:316.00px;top:1672.00px;width:438.30px;height:6.60px;background:linear-gradient(180deg,#cfcfcf,#a2a2a2);clip-path:polygon(0 0,100% 0,calc(100% - 6.50px) 100%,6.50px 100%)"></div>
<div class="a " style="left:316.00px;top:1672.00px;width:6.50px;height:44.00px;background:linear-gradient(90deg,#c8c8c8,#a4a4a4);clip-path:polygon(0 0,100% 6.60px,100% calc(100% - 8.00px),0 100%)"></div>
<div class="a " style="left:322.50px;top:1678.60px;width:11.80px;height:29.40px;background:#7888a6"></div>
<div class="tx" style="left:323.00px;top:1695.00px;font-family:'Liberation Sans';font-weight:400;font-size:16px;color:#e8ecf5;">b</div>
<div class="tx" style="left:338.60px;top:1693.00px;font-family:'Liberation Sans';font-weight:400;font-size:22px;color:#000;transform:scaleX(0.9773);-webkit-text-stroke:.2px #000;">00000000000000000000000000000000</div>
<div class="tx" style="left:825.22px;top:1547.20px;font-family:'Liberation Sans';font-weight:400;font-size:22px;color:#000;transform:scaleX(0.9783);-webkit-text-stroke:.2px #000;">Grating Stage</div>
<div class="tx" style="left:812.40px;top:1571.00px;font-family:'Liberation Sans';font-weight:400;font-size:22px;color:#000;transform:scaleX(0.9971);-webkit-text-stroke:.2px #000;">max travel (mm)</div>
<svg class="a" style="left:795.70px;top:1587.80px" width="22.60" height="46.20" viewBox="0 0 22.60 46.20">
<ellipse cx="11.30" cy="23.10" rx="10.30" ry="22.10" fill="url(#spg)"/>
<path d="M21.02 16.17 A10.30 22.10 0 0 1 4.52 41.58" stroke="#3c3c3c" stroke-width="1.6" fill="none" stroke-dasharray="1.6 1.4"/>
<path d="M2.71 22.18H19.44" stroke="#a0a0a0" stroke-width="1.3"/>
<path d="M2.71 23.79H19.44" stroke="#ececec" stroke-width="1.1"/>
<path d="M8.59 18.48L11.75 10.16" stroke="#222" stroke-width="1.9"/>
<path d="M11.75 11.09L14.92 18.48" stroke="#f2f2f2" stroke-width="1.4"/>
<path d="M8.14 27.72H14.01M9.94 27.72L10.62 35.11" stroke="#2a2a2a" stroke-width="1.9"/>
</svg>
<div class="a " style="left:818.30px;top:1589.70px;width:142.40px;height:44.30px;box-sizing:border-box;border-style:solid;border-width:6.90px 7.80px 7.00px 6.90px;border-color:#b4b4b4 #eeeeee #efefef #adadad;background:#fafafa;"></div>
<div class="a " style="left:818.30px;top:1589.70px;width:142.40px;height:6.90px;background:linear-gradient(180deg,#cfcfcf,#a2a2a2);clip-path:polygon(0 0,100% 0,calc(100% - 7.80px) 100%,6.90px 100%)"></div>
<div class="a " style="left:818.30px;top:1589.70px;width:6.90px;height:44.30px;background:linear-gradient(90deg,#c8c8c8,#a4a4a4);clip-path:polygon(0 0,100% 6.90px,100% calc(100% - 7.00px),0 100%)"></div>
<div class="tx" style="left:826.99px;top:1613.00px;font-family:'Liberation Sans';font-weight:400;font-size:22px;color:#000;transform:scaleX(1.0128);-webkit-text-stroke:.2px #000;">67.500</div>
<div class="tx" style="left:1012.72px;top:1547.00px;font-family:'Liberation Sans';font-weight:400;font-size:22px;color:#000;transform:scaleX(0.9791);-webkit-text-stroke:.2px #000;">Grating Stage</div>
<div class="tx" style="left:1012.75px;top:1571.00px;font-family:'Liberation Sans';font-weight:400;font-size:22px;color:#000;transform:scaleX(0.9526);-webkit-text-stroke:.2px #000;">Pos Threshold (mm)</div>
<svg class="a" style="left:991.20px;top:1582.90px" width="23.50" height="47.10" viewBox="0 0 23.50 47.10">
<ellipse cx="11.75" cy="23.55" rx="10.75" ry="22.55" fill="url(#spg)"/>
<path d="M21.86 16.48 A10.75 22.55 0 0 1 4.70 42.39" stroke="#3c3c3c" stroke-width="1.6" fill="none" stroke-dasharray="1.6 1.4"/>
<path d="M2.82 22.61H20.21" stroke="#a0a0a0" stroke-width="1.3"/>
<path d="M2.82 24.26H20.21" stroke="#ececec" stroke-width="1.1"/>
<path d="M8.93 18.84L12.22 10.36" stroke="#222" stroke-width="1.9"/>
<path d="M12.22 11.30L15.51 18.84" stroke="#f2f2f2" stroke-width="1.4"/>
<path d="M8.46 28.26H14.57M10.34 28.26L11.04 35.80" stroke="#2a2a2a" stroke-width="1.9"/>
</svg>
<div class="a " style="left:1013.70px;top:1585.80px;width:107.10px;height:44.20px;box-sizing:border-box;border-style:solid;border-width:6.90px 7.80px 8.00px 6.90px;border-color:#b4b4b4 #eeeeee #efefef #adadad;background:#fafafa;"></div>
<div class="a " style="left:1013.70px;top:1585.80px;width:107.10px;height:6.90px;background:linear-gradient(180deg,#cfcfcf,#a2a2a2);clip-path:polygon(0 0,100% 0,calc(100% - 7.80px) 100%,6.90px 100%)"></div>
<div class="a " style="left:1013.70px;top:1585.80px;width:6.90px;height:44.20px;background:linear-gradient(90deg,#c8c8c8,#a4a4a4);clip-path:polygon(0 0,100% 6.90px,100% calc(100% - 8.00px),0 100%)"></div>
<div class="tx" style="left:1023.60px;top:1609.00px;font-family:'Liberation Sans';font-weight:400;font-size:22px;color:#000;transform:scaleX(1.0197);-webkit-text-stroke:.2px #000;">0.001</div>
<div class="tx" style="left:799.63px;top:1657.40px;font-family:'Liberation Sans';font-weight:400;font-size:22px;color:#000;transform:scaleX(0.9731);-webkit-text-stroke:.2px #000;">Encoder Status</div>
<div class="a " style="left:800.60px;top:1671.20px;width:105.10px;height:44.80px;box-sizing:border-box;border-style:solid;border-width:6.80px 6.90px 8.00px 5.90px;border-color:#b2b2b2 #eeeeee #efefef #ababab;background:#d3d3d3;"></div>
<div class="a " style="left:800.60px;top:1671.20px;width:105.10px;height:6.80px;background:linear-gradient(180deg,#cfcfcf,#a2a2a2);clip-path:polygon(0 0,100% 0,calc(100% - 6.90px) 100%,5.90px 100%)"></div>
<div class="a " style="left:800.60px;top:1671.20px;width:5.90px;height:44.80px;background:linear-gradient(90deg,#c8c8c8,#a4a4a4);clip-path:polygon(0 0,100% 6.80px,100% calc(100% - 8.00px),0 100%)"></div>
<div class="a " style="left:806.50px;top:1678.00px;width:11.80px;height:30.00px;background:#7888a6"></div>
<div class="tx" style="left:808.30px;top:1695.00px;font-family:'Liberation Sans';font-weight:400;font-size:16px;color:#e8ecf5;">x</div>
<div class="tx" style="left:822.20px;top:1693.50px;font-family:'Liberation Sans';font-weight:400;font-size:22px;color:#000;transform:scaleX(0.9750);-webkit-text-stroke:.2px #000;">0401</div>
<div class="tx" style="left:1017.77px;top:1651.50px;font-family:'Liberation Sans';font-weight:400;font-size:22px;color:#000;transform:scaleX(0.9269);-webkit-text-stroke:.2px #000;">Enc Ch</div>
<svg class="a" style="left:995.00px;top:1663.40px" width="23.70" height="46.60" viewBox="0 0 23.70 46.60">
<ellipse cx="11.85" cy="23.30" rx="10.85" ry="22.30" fill="url(#spg)"/>
<path d="M22.04 16.31 A10.85 22.30 0 0 1 4.74 41.94" stroke="#3c3c3c" stroke-width="1.6" fill="none" stroke-dasharray="1.6 1.4"/>
<path d="M2.84 22.37H20.38" stroke="#a0a0a0" stroke-width="1.3"/>
<path d="M2.84 24.00H20.38" stroke="#ececec" stroke-width="1.1"/>
<path d="M9.01 18.64L12.32 10.25" stroke="#222" stroke-width="1.9"/>
<path d="M12.32 11.18L15.64 18.64" stroke="#f2f2f2" stroke-width="1.4"/>
<path d="M8.53 27.96H14.69M10.43 27.96L11.14 35.42" stroke="#2a2a2a" stroke-width="1.9"/>
</svg>
<div class="a " style="left:1018.70px;top:1666.30px;width:105.00px;height:49.70px;box-sizing:border-box;border-style:solid;border-width:6.90px 6.80px 10.00px 5.90px;border-color:#b4b4b4 #eeeeee #efefef #adadad;background:#fafafa;"></div>
<div class="a " style="left:1018.70px;top:1666.30px;width:105.00px;height:6.90px;background:linear-gradient(180deg,#cfcfcf,#a2a2a2);clip-path:polygon(0 0,100% 0,calc(100% - 6.80px) 100%,5.90px 100%)"></div>
<div class="a " style="left:1018.70px;top:1666.30px;width:5.90px;height:49.70px;background:linear-gradient(90deg,#c8c8c8,#a4a4a4);clip-path:polygon(0 0,100% 6.90px,100% calc(100% - 10.00px),0 100%)"></div>
<div class="tx" style="left:1028.50px;top:1686.00px;font-family:'Liberation Sans';font-weight:400;font-size:22px;color:#000;transform:scaleX(0.9850);-webkit-text-stroke:.2px #000;">3</div>
<div class="a " style="left:727.00px;top:1035.20px;width:164.00px;height:91.40px;box-sizing:border-box;border:2px solid #3d3d3d;background:linear-gradient(180deg,#cfcfcf 0%,#c4c4c4 50%,#b9b9b9 100%)"></div>
<div class="a " style="left:729.00px;top:1037.20px;width:160.00px;height:11.00px;background:linear-gradient(180deg,#dedede,rgba(222,222,222,0));clip-path:polygon(0 0,100% 0,calc(100% - 11px) 100%,11px 100%)"></div>
<div class="a " style="left:729.00px;top:1037.20px;width:11.00px;height:87.40px;background:linear-gradient(90deg,#e2e2e2,rgba(226,226,226,0));clip-path:polygon(0 0,100% 11px,100% calc(100% - 11px),0 100%)"></div>
<div class="a " style="left:878.00px;top:1037.20px;width:11.00px;height:87.40px;background:linear-gradient(90deg,rgba(0,0,0,0),rgba(0,0,0,.55));clip-path:polygon(0 11px,100% 0,100% 100%,0 calc(100% - 11px))"></div>
<div class="a " style="left:729.00px;top:1113.60px;width:160.00px;height:11.00px;background:linear-gradient(180deg,rgba(0,0,0,0),rgba(0,0,0,.42));clip-path:polygon(11px 0,calc(100% - 11px) 0,100% 100%,0 100%)"></div>
<div class="tx" style="left:777.45px;top:1067.40px;font-family:'Liberation Sans';font-weight:700;font-size:24px;color:#000;transform:scaleX(0.9046);">Apply</div>
<div class="tx" style="left:763.05px;top:1096.40px;font-family:'Liberation Sans';font-weight:700;font-size:24px;color:#000;transform:scaleX(0.9098);">Changes</div>
<div class="a " style="left:927.00px;top:1035.20px;width:163.80px;height:91.40px;box-sizing:border-box;border:2px solid #3d3d3d;background:linear-gradient(180deg,#cfcfcf 0%,#c4c4c4 50%,#b9b9b9 100%)"></div>
<div class="a " style="left:929.00px;top:1037.20px;width:159.80px;height:11.00px;background:linear-gradient(180deg,#dedede,rgba(222,222,222,0));clip-path:polygon(0 0,100% 0,calc(100% - 11px) 100%,11px 100%)"></div>
<div class="a " style="left:929.00px;top:1037.20px;width:11.00px;height:87.40px;background:linear-gradient(90deg,#e2e2e2,rgba(226,226,226,0));clip-path:polygon(0 0,100% 11px,100% calc(100% - 11px),0 100%)"></div>
<div class="a " style="left:1077.80px;top:1037.20px;width:11.00px;height:87.40px;background:linear-gradient(90deg,rgba(0,0,0,0),rgba(0,0,0,.55));clip-path:polygon(0 11px,100% 0,100% 100%,0 calc(100% - 11px))"></div>
<div class="a " style="left:929.00px;top:1113.60px;width:159.80px;height:11.00px;background:linear-gradient(180deg,rgba(0,0,0,0),rgba(0,0,0,.42));clip-path:polygon(11px 0,calc(100% - 11px) 0,100% 100%,0 100%)"></div>
<div class="tx" style="left:963.26px;top:1067.40px;font-family:'Liberation Sans';font-weight:700;font-size:24px;color:#000;transform:scaleX(0.9850);">Restore</div>
<div class="tx" style="left:942.20px;top:1096.40px;font-family:'Liberation Sans';font-weight:700;font-size:24px;color:#000;transform:scaleX(0.9755);">from Config</div>
<div class="a " style="left:1127.00px;top:1035.20px;width:164.00px;height:91.40px;box-sizing:border-box;border:2px solid #3d3d3d;background:linear-gradient(180deg,#cfcfcf 0%,#c4c4c4 50%,#b9b9b9 100%)"></div>
<div class="a " style="left:1129.00px;top:1037.20px;width:160.00px;height:11.00px;background:linear-gradient(180deg,#dedede,rgba(222,222,222,0));clip-path:polygon(0 0,100% 0,calc(100% - 11px) 100%,11px 100%)"></div>
<div class="a " style="left:1129.00px;top:1037.20px;width:11.00px;height:87.40px;background:linear-gradient(90deg,#e2e2e2,rgba(226,226,226,0));clip-path:polygon(0 0,100% 11px,100% calc(100% - 11px),0 100%)"></div>
<div class="a " style="left:1278.00px;top:1037.20px;width:11.00px;height:87.40px;background:linear-gradient(90deg,rgba(0,0,0,0),rgba(0,0,0,.55));clip-path:polygon(0 11px,100% 0,100% 100%,0 calc(100% - 11px))"></div>
<div class="a " style="left:1129.00px;top:1113.60px;width:160.00px;height:11.00px;background:linear-gradient(180deg,rgba(0,0,0,0),rgba(0,0,0,.42));clip-path:polygon(11px 0,calc(100% - 11px) 0,100% 100%,0 100%)"></div>
<div class="tx" style="left:1175.50px;top:1067.40px;font-family:'Liberation Sans';font-weight:700;font-size:24px;color:#000;transform:scaleX(1.0605);">Write</div>
<div class="tx" style="left:1157.15px;top:1096.40px;font-family:'Liberation Sans';font-weight:700;font-size:24px;color:#000;transform:scaleX(0.9681);">to Config</div>
<div class="a " style="left:1468.75px;top:1035.20px;width:163.75px;height:91.40px;box-sizing:border-box;border:2px solid #3d3d3d;background:linear-gradient(180deg,#cfcfcf 0%,#c4c4c4 50%,#b9b9b9 100%)"></div>
<div class="a " style="left:1470.75px;top:1037.20px;width:159.75px;height:11.00px;background:linear-gradient(180deg,#dedede,rgba(222,222,222,0));clip-path:polygon(0 0,100% 0,calc(100% - 11px) 100%,11px 100%)"></div>
<div class="a " style="left:1470.75px;top:1037.20px;width:11.00px;height:87.40px;background:linear-gradient(90deg,#e2e2e2,rgba(226,226,226,0));clip-path:polygon(0 0,100% 11px,100% calc(100% - 11px),0 100%)"></div>
<div class="a " style="left:1619.50px;top:1037.20px;width:11.00px;height:87.40px;background:linear-gradient(90deg,rgba(0,0,0,0),rgba(0,0,0,.55));clip-path:polygon(0 11px,100% 0,100% 100%,0 calc(100% - 11px))"></div>
<div class="a " style="left:1470.75px;top:1113.60px;width:159.75px;height:11.00px;background:linear-gradient(180deg,rgba(0,0,0,0),rgba(0,0,0,.42));clip-path:polygon(11px 0,calc(100% - 11px) 0,100% 100%,0 100%)"></div>
<div class="tx" style="left:1510.56px;top:1066.50px;font-family:'Liberation Sans';font-weight:700;font-size:24px;color:#000;transform:scaleX(1.0425);">Re-Init</div>
<div class="tx" style="left:1523.15px;top:1096.00px;font-family:'Liberation Sans';font-weight:700;font-size:24px;color:#000;transform:scaleX(0.9557);">Axes</div>
<div class="a " style="left:729.00px;top:1152.80px;width:162.00px;height:91.40px;box-sizing:border-box;border:2px solid #3d3d3d;background:linear-gradient(180deg,#cfcfcf 0%,#c4c4c4 50%,#b9b9b9 100%)"></div>
<div class="a " style="left:731.00px;top:1154.80px;width:158.00px;height:11.00px;background:linear-gradient(180deg,#dedede,rgba(222,222,222,0));clip-path:polygon(0 0,100% 0,calc(100% - 11px) 100%,11px 100%)"></div>
<div class="a " style="left:731.00px;top:1154.80px;width:11.00px;height:87.40px;background:linear-gradient(90deg,#e2e2e2,rgba(226,226,226,0));clip-path:polygon(0 0,100% 11px,100% calc(100% - 11px),0 100%)"></div>
<div class="a " style="left:878.00px;top:1154.80px;width:11.00px;height:87.40px;background:linear-gradient(90deg,rgba(0,0,0,0),rgba(0,0,0,.55));clip-path:polygon(0 11px,100% 0,100% 100%,0 calc(100% - 11px))"></div>
<div class="a " style="left:731.00px;top:1231.20px;width:158.00px;height:11.00px;background:linear-gradient(180deg,rgba(0,0,0,0),rgba(0,0,0,.42));clip-path:polygon(11px 0,calc(100% - 11px) 0,100% 100%,0 100%)"></div>
<div class="tx" style="left:767.80px;top:1200.00px;font-family:'Liberation Sans';font-weight:700;font-size:32px;color:#e42a1e;transform:scaleX(0.9478);-webkit-text-stroke:1px #e42a1e;">STOP</div>
<div class="a " style="left:775.30px;top:1176.00px;width:59.40px;height:45.90px;background:#3479f2;border-radius:50%"></div>
<svg class="a" style="left:775.3px;top:1176px" width="59.4" height="46" viewBox="775.3 1176 59.4 46"><path d="M804.4 1186.2 L817 1198.2 H810.9 V1203.3 H798.2 V1198.2 H791.8 Z" fill="none" stroke="#fff" stroke-width="2.3" stroke-linejoin="round"/><rect x="798" y="1206.8" width="13.2" height="5.8" rx="1.8" fill="none" stroke="#fff" stroke-width="2.2"/></svg>
<div class="tx" style="left:1471.60px;top:619.60px;font-family:'Liberation Sans';font-weight:700;font-size:21px;color:#000;transform:scaleX(1.0930);">Axis Configuration</div>
<div class="tx" style="left:1489.08px;top:679.60px;font-family:'Liberation Sans';font-weight:400;font-size:22px;color:#000;transform:scaleX(0.9241);-webkit-text-stroke:.2px #000;">En</div>
<div class="tx" style="left:1560.60px;top:679.60px;font-family:'Liberation Sans';font-weight:400;font-size:22px;color:#000;transform:scaleX(0.9557);-webkit-text-stroke:.2px #000;">Addr</div>
<div class="tx" style="left:1666.52px;top:654.50px;font-family:'Liberation Sans';font-weight:400;font-size:22px;color:#000;transform:scaleX(0.9836);-webkit-text-stroke:.2px #000;">Move</div>
<div class="tx" style="left:1680.40px;top:679.60px;font-family:'Liberation Sans';font-weight:400;font-size:22px;color:#000;transform:scaleX(0.9025);-webkit-text-stroke:.2px #000;">Vel</div>
<div class="tx" style="left:1791.91px;top:654.50px;font-family:'Liberation Sans';font-weight:400;font-size:22px;color:#000;transform:scaleX(0.9931);-webkit-text-stroke:.2px #000;">Move</div>
<div class="tx" style="left:1794.20px;top:679.60px;font-family:'Liberation Sans';font-weight:400;font-size:22px;color:#000;transform:scaleX(0.9375);-webkit-text-stroke:.2px #000;">Accel</div>
<div class="tx" style="left:1920.31px;top:654.50px;font-family:'Liberation Sans';font-weight:400;font-size:22px;color:#000;transform:scaleX(0.9893);-webkit-text-stroke:.2px #000;">Move</div>
<div class="tx" style="left:1911.18px;top:679.60px;font-family:'Liberation Sans';font-weight:400;font-size:22px;color:#000;transform:scaleX(1.0174);-webkit-text-stroke:.2px #000;">Current</div>
<div class="tx" style="left:2046.74px;top:654.50px;font-family:'Liberation Sans';font-weight:400;font-size:22px;color:#000;transform:scaleX(0.9602);-webkit-text-stroke:.2px #000;">Hold</div>
<div class="tx" style="left:2030.98px;top:679.60px;font-family:'Liberation Sans';font-weight:400;font-size:22px;color:#000;transform:scaleX(1.0174);-webkit-text-stroke:.2px #000;">Current</div>
<div class="tx" style="left:2166.47px;top:654.50px;font-family:'Liberation Sans';font-weight:400;font-size:22px;color:#000;transform:scaleX(0.9330);-webkit-text-stroke:.2px #000;">Home</div>
<div class="tx" style="left:2179.80px;top:679.60px;font-family:'Liberation Sans';font-weight:400;font-size:22px;color:#000;transform:scaleX(0.9160);-webkit-text-stroke:.2px #000;">Vel</div>
<div class="a" style="left:0;top:0;width:2236px;height:1699px;overflow:hidden">
<div class="a " style="left:1464.70px;top:698.30px;width:835.30px;height:272.20px;box-sizing:border-box;border-style:solid;border-width:7.70px 0.00px 8.00px 8.30px;border-color:#a8a8a8 #cccccc #f0f0f0 #b0b0b0;background:#b4b4b4;"></div>
<div class="a " style="left:1464.70px;top:698.30px;width:835.30px;height:7.70px;background:linear-gradient(180deg,#c4c4c4,#9c9c9c);clip-path:polygon(0 0,100% 0,100% 100%,8.3px 100%)"></div>
<div class="a " style="left:1464.70px;top:698.30px;width:8.30px;height:264.20px;background:linear-gradient(90deg,#cfcfcf,#9e9e9e);clip-path:polygon(0 0,100% 7.7px,100% 100%,0 100%)"></div>
<div class="a " style="left:1473.00px;top:705.50px;width:827.00px;height:86.00px;box-sizing:border-box;border-style:solid;border-width:8.00px 0.00px 9.00px 7.70px;border-color:#888888 #b4b4b4 #bdbdbd #8a8a8a;background:#b4b4b4;"></div>
<div class="a " style="left:1473.00px;top:705.50px;width:827.00px;height:8.00px;background:linear-gradient(180deg,#9e9e9e 0%,#8a8a8a 45%,#767676 100%);clip-path:polygon(0 0,100% 0,100% 100%,7.7px 100%)"></div>
<div class="a " style="left:1486.90px;top:725.00px;width:23.90px;height:24.00px;box-sizing:border-box;border:2.6px solid #000;background:#fff"></div>
<svg class="a" style="left:1489.5px;top:727.6px" width="18.7" height="18.8"><path d="M1 1L17.7 17.8M17.7 1L1 17.8" stroke="#000" stroke-width="1.6"/><circle cx="9.35" cy="9.4" r="1.9" fill="#000"/></svg>
<svg class="a" style="left:1523.00px;top:714.50px" width="22.80" height="45.80" viewBox="0 0 22.80 45.80">
<ellipse cx="11.40" cy="22.90" rx="10.40" ry="21.90" fill="url(#spg)"/>
<path d="M21.20 16.03 A10.40 21.90 0 0 1 4.56 41.22" stroke="#3c3c3c" stroke-width="1.6" fill="none" stroke-dasharray="1.6 1.4"/>
<path d="M2.74 21.98H19.61" stroke="#a0a0a0" stroke-width="1.3"/>
<path d="M2.74 23.59H19.61" stroke="#ececec" stroke-width="1.1"/>
<path d="M8.66 18.32L11.86 10.08" stroke="#222" stroke-width="1.9"/>
<path d="M11.86 10.99L15.05 18.32" stroke="#f2f2f2" stroke-width="1.4"/>
<path d="M8.21 27.48H14.14M10.03 27.48L10.72 34.81" stroke="#2a2a2a" stroke-width="1.9"/>
</svg>
<div class="a " style="left:1547.50px;top:717.50px;width:65.10px;height:44.10px;box-sizing:border-box;border-style:solid;border-width:5.70px 6.00px 8.60px 4.50px;border-color:#8c8c8c #bdbdbd #bfbfbf #919191;background:#fbfbfb;"></div>
<div class="a " style="left:1547.50px;top:717.50px;width:65.10px;height:5.70px;background:linear-gradient(180deg,#aaaaaa,#848484);clip-path:polygon(0 0,100% 0,calc(100% - 6.00px) 100%,4.50px 100%)"></div>
<div class="a " style="left:1547.50px;top:717.50px;width:4.50px;height:44.10px;background:linear-gradient(90deg,#a8a8a8,#8a8a8a);clip-path:polygon(0 0,100% 5.70px,100% calc(100% - 8.60px),0 100%)"></div>
<div class="a" style="left:1552px;top:723.2px;width:48.60px;height:29.8px;overflow:hidden">
<div class="tx" style="left:3.23px;top:15.80px;font-family:'Liberation Sans';font-weight:400;font-size:22px;color:#000;transform:scaleX(0.9750);-webkit-text-stroke:.2px #000;">1</div>
</div>
<svg class="a" style="left:1623.30px;top:714.50px" width="22.80" height="45.80" viewBox="0 0 22.80 45.80">
<ellipse cx="11.40" cy="22.90" rx="10.40" ry="21.90" fill="url(#spg)"/>
<path d="M21.20 16.03 A10.40 21.90 0 0 1 4.56 41.22" stroke="#3c3c3c" stroke-width="1.6" fill="none" stroke-dasharray="1.6 1.4"/>
<path d="M2.74 21.98H19.61" stroke="#a0a0a0" stroke-width="1.3"/>
<path d="M2.74 23.59H19.61" stroke="#ececec" stroke-width="1.1"/>
<path d="M8.66 18.32L11.86 10.08" stroke="#222" stroke-width="1.9"/>
<path d="M11.86 10.99L15.05 18.32" stroke="#f2f2f2" stroke-width="1.4"/>
<path d="M8.21 27.48H14.14M10.03 27.48L10.72 34.81" stroke="#2a2a2a" stroke-width="1.9"/>
</svg>
<div class="a " style="left:1646.00px;top:717.50px;width:89.40px;height:44.10px;box-sizing:border-box;border-style:solid;border-width:5.70px 6.00px 8.60px 7.00px;border-color:#8c8c8c #bdbdbd #bfbfbf #919191;background:#fbfbfb;"></div>
<div class="a " style="left:1646.00px;top:717.50px;width:89.40px;height:5.70px;background:linear-gradient(180deg,#aaaaaa,#848484);clip-path:polygon(0 0,100% 0,calc(100% - 6.00px) 100%,7.00px 100%)"></div>
<div class="a " style="left:1646.00px;top:717.50px;width:7.00px;height:44.10px;background:linear-gradient(90deg,#a8a8a8,#8a8a8a);clip-path:polygon(0 0,100% 5.70px,100% calc(100% - 8.60px),0 100%)"></div>
<div class="a" style="left:1653px;top:723.2px;width:70.40px;height:29.8px;overflow:hidden">
<div class="tx" style="left:3.23px;top:15.80px;font-family:'Liberation Sans';font-weight:400;font-size:22px;color:#000;transform:scaleX(0.9750);-webkit-text-stroke:.2px #000;">250000</div>
</div>
<svg class="a" style="left:1747.00px;top:714.50px" width="22.80" height="45.80" viewBox="0 0 22.80 45.80">
<ellipse cx="11.40" cy="22.90" rx="10.40" ry="21.90" fill="url(#spg)"/>
<path d="M21.20 16.03 A10.40 21.90 0 0 1 4.56 41.22" stroke="#3c3c3c" stroke-width="1.6" fill="none" stroke-dasharray="1.6 1.4"/>
<path d="M2.74 21.98H19.61" stroke="#a0a0a0" stroke-width="1.3"/>
<path d="M2.74 23.59H19.61" stroke="#ececec" stroke-width="1.1"/>
<path d="M8.66 18.32L11.86 10.08" stroke="#222" stroke-width="1.9"/>
<path d="M11.86 10.99L15.05 18.32" stroke="#f2f2f2" stroke-width="1.4"/>
<path d="M8.21 27.48H14.14M10.03 27.48L10.72 34.81" stroke="#2a2a2a" stroke-width="1.9"/>
</svg>
<div class="a " style="left:1770.50px;top:717.50px;width:88.50px;height:44.10px;box-sizing:border-box;border-style:solid;border-width:5.70px 6.00px 8.60px 6.30px;border-color:#8c8c8c #bdbdbd #bfbfbf #919191;background:#fbfbfb;"></div>
<div class="a " style="left:1770.50px;top:717.50px;width:88.50px;height:5.70px;background:linear-gradient(180deg,#aaaaaa,#848484);clip-path:polygon(0 0,100% 0,calc(100% - 6.00px) 100%,6.30px 100%)"></div>
<div class="a " style="left:1770.50px;top:717.50px;width:6.30px;height:44.10px;background:linear-gradient(90deg,#a8a8a8,#8a8a8a);clip-path:polygon(0 0,100% 5.70px,100% calc(100% - 8.60px),0 100%)"></div>
<div class="a" style="left:1776.8px;top:723.2px;width:70.20px;height:29.8px;overflow:hidden">
<div class="tx" style="left:3.23px;top:15.80px;font-family:'Liberation Sans';font-weight:400;font-size:22px;color:#000;transform:scaleX(0.9750);-webkit-text-stroke:.2px #000;">1000</div>
</div>
<svg class="a" style="left:1877.20px;top:714.50px" width="22.80" height="45.80" viewBox="0 0 22.80 45.80">
<ellipse cx="11.40" cy="22.90" rx="10.40" ry="21.90" fill="url(#spg)"/>
<path d="M21.20 16.03 A10.40 21.90 0 0 1 4.56 41.22" stroke="#3c3c3c" stroke-width="1.6" fill="none" stroke-dasharray="1.6 1.4"/>
<path d="M2.74 21.98H19.61" stroke="#a0a0a0" stroke-width="1.3"/>
<path d="M2.74 23.59H19.61" stroke="#ececec" stroke-width="1.1"/>
<path d="M8.66 18.32L11.86 10.08" stroke="#222" stroke-width="1.9"/>
<path d="M11.86 10.99L15.05 18.32" stroke="#f2f2f2" stroke-width="1.4"/>
<path d="M8.21 27.48H14.14M10.03 27.48L10.72 34.81" stroke="#2a2a2a" stroke-width="1.9"/>
</svg>
<div class="a " style="left:1900.50px;top:717.50px;width:87.90px;height:44.10px;box-sizing:border-box;border-style:solid;border-width:5.70px 6.00px 8.60px 5.90px;border-color:#8c8c8c #bdbdbd #bfbfbf #919191;background:#fbfbfb;"></div>
<div class="a " style="left:1900.50px;top:717.50px;width:87.90px;height:5.70px;background:linear-gradient(180deg,#aaaaaa,#848484);clip-path:polygon(0 0,100% 0,calc(100% - 6.00px) 100%,5.90px 100%)"></div>
<div class="a " style="left:1900.50px;top:717.50px;width:5.90px;height:44.10px;background:linear-gradient(90deg,#a8a8a8,#8a8a8a);clip-path:polygon(0 0,100% 5.70px,100% calc(100% - 8.60px),0 100%)"></div>
<div class="a" style="left:1906.4px;top:723.2px;width:70.00px;height:29.8px;overflow:hidden">
<div class="tx" style="left:3.23px;top:15.80px;font-family:'Liberation Sans';font-weight:400;font-size:22px;color:#000;transform:scaleX(0.9750);-webkit-text-stroke:.2px #000;">100</div>
</div>
<svg class="a" style="left:2001.40px;top:714.50px" width="22.80" height="45.80" viewBox="0 0 22.80 45.80">
<ellipse cx="11.40" cy="22.90" rx="10.40" ry="21.90" fill="url(#spg)"/>
<path d="M21.20 16.03 A10.40 21.90 0 0 1 4.56 41.22" stroke="#3c3c3c" stroke-width="1.6" fill="none" stroke-dasharray="1.6 1.4"/>
<path d="M2.74 21.98H19.61" stroke="#a0a0a0" stroke-width="1.3"/>
<path d="M2.74 23.59H19.61" stroke="#ececec" stroke-width="1.1"/>
<path d="M8.66 18.32L11.86 10.08" stroke="#222" stroke-width="1.9"/>
<path d="M11.86 10.99L15.05 18.32" stroke="#f2f2f2" stroke-width="1.4"/>
<path d="M8.21 27.48H14.14M10.03 27.48L10.72 34.81" stroke="#2a2a2a" stroke-width="1.9"/>
</svg>
<div class="a " style="left:2024.00px;top:717.50px;width:88.30px;height:44.10px;box-sizing:border-box;border-style:solid;border-width:5.70px 6.00px 8.60px 6.30px;border-color:#8c8c8c #bdbdbd #bfbfbf #919191;background:#fbfbfb;"></div>
<div class="a " style="left:2024.00px;top:717.50px;width:88.30px;height:5.70px;background:linear-gradient(180deg,#aaaaaa,#848484);clip-path:polygon(0 0,100% 0,calc(100% - 6.00px) 100%,6.30px 100%)"></div>
<div class="a " style="left:2024.00px;top:717.50px;width:6.30px;height:44.10px;background:linear-gradient(90deg,#a8a8a8,#8a8a8a);clip-path:polygon(0 0,100% 5.70px,100% calc(100% - 8.60px),0 100%)"></div>
<div class="a" style="left:2030.3px;top:723.2px;width:70.00px;height:29.8px;overflow:hidden">
<div class="tx" style="left:4.20px;top:15.80px;font-family:'Liberation Sans';font-weight:400;font-size:22px;color:#000;transform:scaleX(0.9750);-webkit-text-stroke:.2px #000;">0</div>
</div>
<svg class="a" style="left:2127.80px;top:714.50px" width="22.80" height="45.80" viewBox="0 0 22.80 45.80">
<ellipse cx="11.40" cy="22.90" rx="10.40" ry="21.90" fill="url(#spg)"/>
<path d="M21.20 16.03 A10.40 21.90 0 0 1 4.56 41.22" stroke="#3c3c3c" stroke-width="1.6" fill="none" stroke-dasharray="1.6 1.4"/>
<path d="M2.74 21.98H19.61" stroke="#a0a0a0" stroke-width="1.3"/>
<path d="M2.74 23.59H19.61" stroke="#ececec" stroke-width="1.1"/>
<path d="M8.66 18.32L11.86 10.08" stroke="#222" stroke-width="1.9"/>
<path d="M11.86 10.99L15.05 18.32" stroke="#f2f2f2" stroke-width="1.4"/>
<path d="M8.21 27.48H14.14M10.03 27.48L10.72 34.81" stroke="#2a2a2a" stroke-width="1.9"/>
</svg>
<div class="a " style="left:2150.20px;top:717.50px;width:88.40px;height:44.10px;box-sizing:border-box;border-style:solid;border-width:5.70px 6.00px 8.60px 6.50px;border-color:#8c8c8c #bdbdbd #bfbfbf #919191;background:#fbfbfb;"></div>
<div class="a " style="left:2150.20px;top:717.50px;width:88.40px;height:5.70px;background:linear-gradient(180deg,#aaaaaa,#848484);clip-path:polygon(0 0,100% 0,calc(100% - 6.00px) 100%,6.50px 100%)"></div>
<div class="a " style="left:2150.20px;top:717.50px;width:6.50px;height:44.10px;background:linear-gradient(90deg,#a8a8a8,#8a8a8a);clip-path:polygon(0 0,100% 5.70px,100% calc(100% - 8.60px),0 100%)"></div>
<div class="a" style="left:2156.7px;top:723.2px;width:69.90px;height:29.8px;overflow:hidden">
<div class="tx" style="left:4.20px;top:15.80px;font-family:'Liberation Sans';font-weight:400;font-size:22px;color:#000;transform:scaleX(0.9750);-webkit-text-stroke:.2px #000;">50000</div>
</div>
<div class="tx" style="left:1339.33px;top:741.40px;font-family:'Liberation Sans';font-weight:400;font-size:22px;color:#000;transform:scaleX(0.9743);-webkit-text-stroke:.2px #000;">Filter Wheel</div>
<div class="a " style="left:1473.00px;top:791.50px;width:827.00px;height:86.00px;box-sizing:border-box;border-style:solid;border-width:8.00px 0.00px 9.00px 7.70px;border-color:#888888 #b4b4b4 #bdbdbd #8a8a8a;background:#b4b4b4;"></div>
<div class="a " style="left:1473.00px;top:791.50px;width:827.00px;height:8.00px;background:linear-gradient(180deg,#9e9e9e 0%,#8a8a8a 45%,#767676 100%);clip-path:polygon(0 0,100% 0,100% 100%,7.7px 100%)"></div>
<div class="a " style="left:1486.90px;top:811.00px;width:23.90px;height:24.00px;box-sizing:border-box;border:2.6px solid #000;background:#fff"></div>
<svg class="a" style="left:1489.5px;top:813.6px" width="18.7" height="18.8"><path d="M1 1L17.7 17.8M17.7 1L1 17.8" stroke="#000" stroke-width="1.6"/><circle cx="9.35" cy="9.4" r="1.9" fill="#000"/></svg>
<svg class="a" style="left:1523.00px;top:800.50px" width="22.80" height="45.80" viewBox="0 0 22.80 45.80">
<ellipse cx="11.40" cy="22.90" rx="10.40" ry="21.90" fill="url(#spg)"/>
<path d="M21.20 16.03 A10.40 21.90 0 0 1 4.56 41.22" stroke="#3c3c3c" stroke-width="1.6" fill="none" stroke-dasharray="1.6 1.4"/>
<path d="M2.74 21.98H19.61" stroke="#a0a0a0" stroke-width="1.3"/>
<path d="M2.74 23.59H19.61" stroke="#ececec" stroke-width="1.1"/>
<path d="M8.66 18.32L11.86 10.08" stroke="#222" stroke-width="1.9"/>
<path d="M11.86 10.99L15.05 18.32" stroke="#f2f2f2" stroke-width="1.4"/>
<path d="M8.21 27.48H14.14M10.03 27.48L10.72 34.81" stroke="#2a2a2a" stroke-width="1.9"/>
</svg>
<div class="a " style="left:1547.50px;top:803.50px;width:65.10px;height:44.10px;box-sizing:border-box;border-style:solid;border-width:5.70px 6.00px 8.60px 4.50px;border-color:#8c8c8c #bdbdbd #bfbfbf #919191;background:#fbfbfb;"></div>
<div class="a " style="left:1547.50px;top:803.50px;width:65.10px;height:5.70px;background:linear-gradient(180deg,#aaaaaa,#848484);clip-path:polygon(0 0,100% 0,calc(100% - 6.00px) 100%,4.50px 100%)"></div>
<div class="a " style="left:1547.50px;top:803.50px;width:4.50px;height:44.10px;background:linear-gradient(90deg,#a8a8a8,#8a8a8a);clip-path:polygon(0 0,100% 5.70px,100% calc(100% - 8.60px),0 100%)"></div>
<div class="a" style="left:1552px;top:809.2px;width:48.60px;height:29.8px;overflow:hidden">
<div class="tx" style="left:3.23px;top:15.80px;font-family:'Liberation Sans';font-weight:400;font-size:22px;color:#000;transform:scaleX(0.9750);-webkit-text-stroke:.2px #000;">2</div>
</div>
<svg class="a" style="left:1623.30px;top:800.50px" width="22.80" height="45.80" viewBox="0 0 22.80 45.80">
<ellipse cx="11.40" cy="22.90" rx="10.40" ry="21.90" fill="url(#spg)"/>
<path d="M21.20 16.03 A10.40 21.90 0 0 1 4.56 41.22" stroke="#3c3c3c" stroke-width="1.6" fill="none" stroke-dasharray="1.6 1.4"/>
<path d="M2.74 21.98H19.61" stroke="#a0a0a0" stroke-width="1.3"/>
<path d="M2.74 23.59H19.61" stroke="#ececec" stroke-width="1.1"/>
<path d="M8.66 18.32L11.86 10.08" stroke="#222" stroke-width="1.9"/>
<path d="M11.86 10.99L15.05 18.32" stroke="#f2f2f2" stroke-width="1.4"/>
<path d="M8.21 27.48H14.14M10.03 27.48L10.72 34.81" stroke="#2a2a2a" stroke-width="1.9"/>
</svg>
<div class="a " style="left:1646.00px;top:803.50px;width:89.40px;height:44.10px;box-sizing:border-box;border-style:solid;border-width:5.70px 6.00px 8.60px 7.00px;border-color:#8c8c8c #bdbdbd #bfbfbf #919191;background:#fbfbfb;"></div>
<div class="a " style="left:1646.00px;top:803.50px;width:89.40px;height:5.70px;background:linear-gradient(180deg,#aaaaaa,#848484);clip-path:polygon(0 0,100% 0,calc(100% - 6.00px) 100%,7.00px 100%)"></div>
<div class="a " style="left:1646.00px;top:803.50px;width:7.00px;height:44.10px;background:linear-gradient(90deg,#a8a8a8,#8a8a8a);clip-path:polygon(0 0,100% 5.70px,100% calc(100% - 8.60px),0 100%)"></div>
<div class="a" style="left:1653px;top:809.2px;width:70.40px;height:29.8px;overflow:hidden">
<div class="tx" style="left:3.23px;top:15.80px;font-family:'Liberation Sans';font-weight:400;font-size:22px;color:#000;transform:scaleX(0.9750);-webkit-text-stroke:.2px #000;">250000</div>
</div>
<svg class="a" style="left:1747.00px;top:800.50px" width="22.80" height="45.80" viewBox="0 0 22.80 45.80">
<ellipse cx="11.40" cy="22.90" rx="10.40" ry="21.90" fill="url(#spg)"/>
<path d="M21.20 16.03 A10.40 21.90 0 0 1 4.56 41.22" stroke="#3c3c3c" stroke-width="1.6" fill="none" stroke-dasharray="1.6 1.4"/>
<path d="M2.74 21.98H19.61" stroke="#a0a0a0" stroke-width="1.3"/>
<path d="M2.74 23.59H19.61" stroke="#ececec" stroke-width="1.1"/>
<path d="M8.66 18.32L11.86 10.08" stroke="#222" stroke-width="1.9"/>
<path d="M11.86 10.99L15.05 18.32" stroke="#f2f2f2" stroke-width="1.4"/>
<path d="M8.21 27.48H14.14M10.03 27.48L10.72 34.81" stroke="#2a2a2a" stroke-width="1.9"/>
</svg>
<div class="a " style="left:1770.50px;top:803.50px;width:88.50px;height:44.10px;box-sizing:border-box;border-style:solid;border-width:5.70px 6.00px 8.60px 6.30px;border-color:#8c8c8c #bdbdbd #bfbfbf #919191;background:#fbfbfb;"></div>
<div class="a " style="left:1770.50px;top:803.50px;width:88.50px;height:5.70px;background:linear-gradient(180deg,#aaaaaa,#848484);clip-path:polygon(0 0,100% 0,calc(100% - 6.00px) 100%,6.30px 100%)"></div>
<div class="a " style="left:1770.50px;top:803.50px;width:6.30px;height:44.10px;background:linear-gradient(90deg,#a8a8a8,#8a8a8a);clip-path:polygon(0 0,100% 5.70px,100% calc(100% - 8.60px),0 100%)"></div>
<div class="a" style="left:1776.8px;top:809.2px;width:70.20px;height:29.8px;overflow:hidden">
<div class="tx" style="left:3.23px;top:15.80px;font-family:'Liberation Sans';font-weight:400;font-size:22px;color:#000;transform:scaleX(0.9750);-webkit-text-stroke:.2px #000;">1000</div>
</div>
<svg class="a" style="left:1877.20px;top:800.50px" width="22.80" height="45.80" viewBox="0 0 22.80 45.80">
<ellipse cx="11.40" cy="22.90" rx="10.40" ry="21.90" fill="url(#spg)"/>
<path d="M21.20 16.03 A10.40 21.90 0 0 1 4.56 41.22" stroke="#3c3c3c" stroke-width="1.6" fill="none" stroke-dasharray="1.6 1.4"/>
<path d="M2.74 21.98H19.61" stroke="#a0a0a0" stroke-width="1.3"/>
<path d="M2.74 23.59H19.61" stroke="#ececec" stroke-width="1.1"/>
<path d="M8.66 18.32L11.86 10.08" stroke="#222" stroke-width="1.9"/>
<path d="M11.86 10.99L15.05 18.32" stroke="#f2f2f2" stroke-width="1.4"/>
<path d="M8.21 27.48H14.14M10.03 27.48L10.72 34.81" stroke="#2a2a2a" stroke-width="1.9"/>
</svg>
<div class="a " style="left:1900.50px;top:803.50px;width:87.90px;height:44.10px;box-sizing:border-box;border-style:solid;border-width:5.70px 6.00px 8.60px 5.90px;border-color:#8c8c8c #bdbdbd #bfbfbf #919191;background:#fbfbfb;"></div>
<div class="a " style="left:1900.50px;top:803.50px;width:87.90px;height:5.70px;background:linear-gradient(180deg,#aaaaaa,#848484);clip-path:polygon(0 0,100% 0,calc(100% - 6.00px) 100%,5.90px 100%)"></div>
<div class="a " style="left:1900.50px;top:803.50px;width:5.90px;height:44.10px;background:linear-gradient(90deg,#a8a8a8,#8a8a8a);clip-path:polygon(0 0,100% 5.70px,100% calc(100% - 8.60px),0 100%)"></div>
<div class="a" style="left:1906.4px;top:809.2px;width:70.00px;height:29.8px;overflow:hidden">
<div class="tx" style="left:3.23px;top:15.80px;font-family:'Liberation Sans';font-weight:400;font-size:22px;color:#000;transform:scaleX(0.9750);-webkit-text-stroke:.2px #000;">100</div>
</div>
<svg class="a" style="left:2001.40px;top:800.50px" width="22.80" height="45.80" viewBox="0 0 22.80 45.80">
<ellipse cx="11.40" cy="22.90" rx="10.40" ry="21.90" fill="url(#spg)"/>
<path d="M21.20 16.03 A10.40 21.90 0 0 1 4.56 41.22" stroke="#3c3c3c" stroke-width="1.6" fill="none" stroke-dasharray="1.6 1.4"/>
<path d="M2.74 21.98H19.61" stroke="#a0a0a0" stroke-width="1.3"/>
<path d="M2.74 23.59H19.61" stroke="#ececec" stroke-width="1.1"/>
<path d="M8.66 18.32L11.86 10.08" stroke="#222" stroke-width="1.9"/>
<path d="M11.86 10.99L15.05 18.32" stroke="#f2f2f2" stroke-width="1.4"/>
<path d="M8.21 27.48H14.14M10.03 27.48L10.72 34.81" stroke="#2a2a2a" stroke-width="1.9"/>
</svg>
<div class="a " style="left:2024.00px;top:803.50px;width:88.30px;height:44.10px;box-sizing:border-box;border-style:solid;border-width:5.70px 6.00px 8.60px 6.30px;border-color:#8c8c8c #bdbdbd #bfbfbf #919191;background:#fbfbfb;"></div>
<div class="a " style="left:2024.00px;top:803.50px;width:88.30px;height:5.70px;background:linear-gradient(180deg,#aaaaaa,#848484);clip-path:polygon(0 0,100% 0,calc(100% - 6.00px) 100%,6.30px 100%)"></div>
<div class="a " style="left:2024.00px;top:803.50px;width:6.30px;height:44.10px;background:linear-gradient(90deg,#a8a8a8,#8a8a8a);clip-path:polygon(0 0,100% 5.70px,100% calc(100% - 8.60px),0 100%)"></div>
<div class="a" style="left:2030.3px;top:809.2px;width:70.00px;height:29.8px;overflow:hidden">
<div class="tx" style="left:4.20px;top:15.80px;font-family:'Liberation Sans';font-weight:400;font-size:22px;color:#000;transform:scaleX(0.9750);-webkit-text-stroke:.2px #000;">0</div>
</div>
<svg class="a" style="left:2127.80px;top:800.50px" width="22.80" height="45.80" viewBox="0 0 22.80 45.80">
<ellipse cx="11.40" cy="22.90" rx="10.40" ry="21.90" fill="url(#spg)"/>
<path d="M21.20 16.03 A10.40 21.90 0 0 1 4.56 41.22" stroke="#3c3c3c" stroke-width="1.6" fill="none" stroke-dasharray="1.6 1.4"/>
<path d="M2.74 21.98H19.61" stroke="#a0a0a0" stroke-width="1.3"/>
<path d="M2.74 23.59H19.61" stroke="#ececec" stroke-width="1.1"/>
<path d="M8.66 18.32L11.86 10.08" stroke="#222" stroke-width="1.9"/>
<path d="M11.86 10.99L15.05 18.32" stroke="#f2f2f2" stroke-width="1.4"/>
<path d="M8.21 27.48H14.14M10.03 27.48L10.72 34.81" stroke="#2a2a2a" stroke-width="1.9"/>
</svg>
<div class="a " style="left:2150.20px;top:803.50px;width:88.40px;height:44.10px;box-sizing:border-box;border-style:solid;border-width:5.70px 6.00px 8.60px 6.50px;border-color:#8c8c8c #bdbdbd #bfbfbf #919191;background:#fbfbfb;"></div>
<div class="a " style="left:2150.20px;top:803.50px;width:88.40px;height:5.70px;background:linear-gradient(180deg,#aaaaaa,#848484);clip-path:polygon(0 0,100% 0,calc(100% - 6.00px) 100%,6.50px 100%)"></div>
<div class="a " style="left:2150.20px;top:803.50px;width:6.50px;height:44.10px;background:linear-gradient(90deg,#a8a8a8,#8a8a8a);clip-path:polygon(0 0,100% 5.70px,100% calc(100% - 8.60px),0 100%)"></div>
<div class="a" style="left:2156.7px;top:809.2px;width:69.90px;height:29.8px;overflow:hidden">
<div class="tx" style="left:4.20px;top:15.80px;font-family:'Liberation Sans';font-weight:400;font-size:22px;color:#000;transform:scaleX(0.9750);-webkit-text-stroke:.2px #000;">50000</div>
</div>
<div class="tx" style="left:1317.23px;top:827.40px;font-family:'Liberation Sans';font-weight:400;font-size:22px;color:#000;transform:scaleX(0.9702);-webkit-text-stroke:.2px #000;">Grating Wheel</div>
<div class="a " style="left:1473.00px;top:877.50px;width:827.00px;height:86.00px;box-sizing:border-box;border-style:solid;border-width:8.00px 0.00px 9.00px 7.70px;border-color:#888888 #b4b4b4 #bdbdbd #8a8a8a;background:#b4b4b4;"></div>
<div class="a " style="left:1473.00px;top:877.50px;width:827.00px;height:8.00px;background:linear-gradient(180deg,#9e9e9e 0%,#8a8a8a 45%,#767676 100%);clip-path:polygon(0 0,100% 0,100% 100%,7.7px 100%)"></div>
<div class="a " style="left:1486.90px;top:897.00px;width:23.90px;height:24.00px;box-sizing:border-box;border:2.6px solid #000;background:#fff"></div>
<svg class="a" style="left:1489.5px;top:899.6px" width="18.7" height="18.8"><path d="M1 1L17.7 17.8M17.7 1L1 17.8" stroke="#000" stroke-width="1.6"/><circle cx="9.35" cy="9.4" r="1.9" fill="#000"/></svg>
<svg class="a" style="left:1523.00px;top:886.50px" width="22.80" height="45.80" viewBox="0 0 22.80 45.80">
<ellipse cx="11.40" cy="22.90" rx="10.40" ry="21.90" fill="url(#spg)"/>
<path d="M21.20 16.03 A10.40 21.90 0 0 1 4.56 41.22" stroke="#3c3c3c" stroke-width="1.6" fill="none" stroke-dasharray="1.6 1.4"/>
<path d="M2.74 21.98H19.61" stroke="#a0a0a0" stroke-width="1.3"/>
<path d="M2.74 23.59H19.61" stroke="#ececec" stroke-width="1.1"/>
<path d="M8.66 18.32L11.86 10.08" stroke="#222" stroke-width="1.9"/>
<path d="M11.86 10.99L15.05 18.32" stroke="#f2f2f2" stroke-width="1.4"/>
<path d="M8.21 27.48H14.14M10.03 27.48L10.72 34.81" stroke="#2a2a2a" stroke-width="1.9"/>
</svg>
<div class="a " style="left:1547.50px;top:889.50px;width:65.10px;height:44.10px;box-sizing:border-box;border-style:solid;border-width:5.70px 6.00px 8.60px 4.50px;border-color:#8c8c8c #bdbdbd #bfbfbf #919191;background:#fbfbfb;"></div>
<div class="a " style="left:1547.50px;top:889.50px;width:65.10px;height:5.70px;background:linear-gradient(180deg,#aaaaaa,#848484);clip-path:polygon(0 0,100% 0,calc(100% - 6.00px) 100%,4.50px 100%)"></div>
<div class="a " style="left:1547.50px;top:889.50px;width:4.50px;height:44.10px;background:linear-gradient(90deg,#a8a8a8,#8a8a8a);clip-path:polygon(0 0,100% 5.70px,100% calc(100% - 8.60px),0 100%)"></div>
<div class="a" style="left:1552px;top:895.2px;width:48.60px;height:29.8px;overflow:hidden">
<div class="tx" style="left:4.20px;top:15.80px;font-family:'Liberation Sans';font-weight:400;font-size:22px;color:#000;transform:scaleX(0.9750);-webkit-text-stroke:.2px #000;">3</div>
</div>
<svg class="a" style="left:1623.30px;top:886.50px" width="22.80" height="45.80" viewBox="0 0 22.80 45.80">
<ellipse cx="11.40" cy="22.90" rx="10.40" ry="21.90" fill="url(#spg)"/>
<path d="M21.20 16.03 A10.40 21.90 0 0 1 4.56 41.22" stroke="#3c3c3c" stroke-width="1.6" fill="none" stroke-dasharray="1.6 1.4"/>
<path d="M2.74 21.98H19.61" stroke="#a0a0a0" stroke-width="1.3"/>
<path d="M2.74 23.59H19.61" stroke="#ececec" stroke-width="1.1"/>
<path d="M8.66 18.32L11.86 10.08" stroke="#222" stroke-width="1.9"/>
<path d="M11.86 10.99L15.05 18.32" stroke="#f2f2f2" stroke-width="1.4"/>
<path d="M8.21 27.48H14.14M10.03 27.48L10.72 34.81" stroke="#2a2a2a" stroke-width="1.9"/>
</svg>
<div class="a " style="left:1646.00px;top:889.50px;width:89.40px;height:44.10px;box-sizing:border-box;border-style:solid;border-width:5.70px 6.00px 8.60px 7.00px;border-color:#8c8c8c #bdbdbd #bfbfbf #919191;background:#fbfbfb;"></div>
<div class="a " style="left:1646.00px;top:889.50px;width:89.40px;height:5.70px;background:linear-gradient(180deg,#aaaaaa,#848484);clip-path:polygon(0 0,100% 0,calc(100% - 6.00px) 100%,7.00px 100%)"></div>
<div class="a " style="left:1646.00px;top:889.50px;width:7.00px;height:44.10px;background:linear-gradient(90deg,#a8a8a8,#8a8a8a);clip-path:polygon(0 0,100% 5.70px,100% calc(100% - 8.60px),0 100%)"></div>
<div class="a" style="left:1653px;top:895.2px;width:70.40px;height:29.8px;overflow:hidden">
<div class="tx" style="left:3.23px;top:15.80px;font-family:'Liberation Sans';font-weight:400;font-size:22px;color:#000;transform:scaleX(0.9750);-webkit-text-stroke:.2px #000;">200000</div>
</div>
<svg class="a" style="left:1747.00px;top:886.50px" width="22.80" height="45.80" viewBox="0 0 22.80 45.80">
<ellipse cx="11.40" cy="22.90" rx="10.40" ry="21.90" fill="url(#spg)"/>
<path d="M21.20 16.03 A10.40 21.90 0 0 1 4.56 41.22" stroke="#3c3c3c" stroke-width="1.6" fill="none" stroke-dasharray="1.6 1.4"/>
<path d="M2.74 21.98H19.61" stroke="#a0a0a0" stroke-width="1.3"/>
<path d="M2.74 23.59H19.61" stroke="#ececec" stroke-width="1.1"/>
<path d="M8.66 18.32L11.86 10.08" stroke="#222" stroke-width="1.9"/>
<path d="M11.86 10.99L15.05 18.32" stroke="#f2f2f2" stroke-width="1.4"/>
<path d="M8.21 27.48H14.14M10.03 27.48L10.72 34.81" stroke="#2a2a2a" stroke-width="1.9"/>
</svg>
<div class="a " style="left:1770.50px;top:889.50px;width:88.50px;height:44.10px;box-sizing:border-box;border-style:solid;border-width:5.70px 6.00px 8.60px 6.30px;border-color:#8c8c8c #bdbdbd #bfbfbf #919191;background:#fbfbfb;"></div>
<div class="a " style="left:1770.50px;top:889.50px;width:88.50px;height:5.70px;background:linear-gradient(180deg,#aaaaaa,#848484);clip-path:polygon(0 0,100% 0,calc(100% - 6.00px) 100%,6.30px 100%)"></div>
<div class="a " style="left:1770.50px;top:889.50px;width:6.30px;height:44.10px;background:linear-gradient(90deg,#a8a8a8,#8a8a8a);clip-path:polygon(0 0,100% 5.70px,100% calc(100% - 8.60px),0 100%)"></div>
<div class="a" style="left:1776.8px;top:895.2px;width:70.20px;height:29.8px;overflow:hidden">
<div class="tx" style="left:4.20px;top:15.80px;font-family:'Liberation Sans';font-weight:400;font-size:22px;color:#000;transform:scaleX(0.9750);-webkit-text-stroke:.2px #000;">50</div>
</div>
<svg class="a" style="left:1877.20px;top:886.50px" width="22.80" height="45.80" viewBox="0 0 22.80 45.80">
<ellipse cx="11.40" cy="22.90" rx="10.40" ry="21.90" fill="url(#spg)"/>
<path d="M21.20 16.03 A10.40 21.90 0 0 1 4.56 41.22" stroke="#3c3c3c" stroke-width="1.6" fill="none" stroke-dasharray="1.6 1.4"/>
<path d="M2.74 21.98H19.61" stroke="#a0a0a0" stroke-width="1.3"/>
<path d="M2.74 23.59H19.61" stroke="#ececec" stroke-width="1.1"/>
<path d="M8.66 18.32L11.86 10.08" stroke="#222" stroke-width="1.9"/>
<path d="M11.86 10.99L15.05 18.32" stroke="#f2f2f2" stroke-width="1.4"/>
<path d="M8.21 27.48H14.14M10.03 27.48L10.72 34.81" stroke="#2a2a2a" stroke-width="1.9"/>
</svg>
<div class="a " style="left:1900.50px;top:889.50px;width:87.90px;height:44.10px;box-sizing:border-box;border-style:solid;border-width:5.70px 6.00px 8.60px 5.90px;border-color:#8c8c8c #bdbdbd #bfbfbf #919191;background:#fbfbfb;"></div>
<div class="a " style="left:1900.50px;top:889.50px;width:87.90px;height:5.70px;background:linear-gradient(180deg,#aaaaaa,#848484);clip-path:polygon(0 0,100% 0,calc(100% - 6.00px) 100%,5.90px 100%)"></div>
<div class="a " style="left:1900.50px;top:889.50px;width:5.90px;height:44.10px;background:linear-gradient(90deg,#a8a8a8,#8a8a8a);clip-path:polygon(0 0,100% 5.70px,100% calc(100% - 8.60px),0 100%)"></div>
<div class="a" style="left:1906.4px;top:895.2px;width:70.00px;height:29.8px;overflow:hidden">
<div class="tx" style="left:3.23px;top:15.80px;font-family:'Liberation Sans';font-weight:400;font-size:22px;color:#000;transform:scaleX(0.9750);-webkit-text-stroke:.2px #000;">100</div>
</div>
<svg class="a" style="left:2001.40px;top:886.50px" width="22.80" height="45.80" viewBox="0 0 22.80 45.80">
<ellipse cx="11.40" cy="22.90" rx="10.40" ry="21.90" fill="url(#spg)"/>
<path d="M21.20 16.03 A10.40 21.90 0 0 1 4.56 41.22" stroke="#3c3c3c" stroke-width="1.6" fill="none" stroke-dasharray="1.6 1.4"/>
<path d="M2.74 21.98H19.61" stroke="#a0a0a0" stroke-width="1.3"/>
<path d="M2.74 23.59H19.61" stroke="#ececec" stroke-width="1.1"/>
<path d="M8.66 18.32L11.86 10.08" stroke="#222" stroke-width="1.9"/>
<path d="M11.86 10.99L15.05 18.32" stroke="#f2f2f2" stroke-width="1.4"/>
<path d="M8.21 27.48H14.14M10.03 27.48L10.72 34.81" stroke="#2a2a2a" stroke-width="1.9"/>
</svg>
<div class="a " style="left:2024.00px;top:889.50px;width:88.30px;height:44.10px;box-sizing:border-box;border-style:solid;border-width:5.70px 6.00px 8.60px 6.30px;border-color:#8c8c8c #bdbdbd #bfbfbf #919191;background:#fbfbfb;"></div>
<div class="a " style="left:2024.00px;top:889.50px;width:88.30px;height:5.70px;background:linear-gradient(180deg,#aaaaaa,#848484);clip-path:polygon(0 0,100% 0,calc(100% - 6.00px) 100%,6.30px 100%)"></div>
<div class="a " style="left:2024.00px;top:889.50px;width:6.30px;height:44.10px;background:linear-gradient(90deg,#a8a8a8,#8a8a8a);clip-path:polygon(0 0,100% 5.70px,100% calc(100% - 8.60px),0 100%)"></div>
<div class="a" style="left:2030.3px;top:895.2px;width:70.00px;height:29.8px;overflow:hidden">
<div class="tx" style="left:3.23px;top:15.80px;font-family:'Liberation Sans';font-weight:400;font-size:22px;color:#000;transform:scaleX(0.9750);-webkit-text-stroke:.2px #000;">10</div>
</div>
<svg class="a" style="left:2127.80px;top:886.50px" width="22.80" height="45.80" viewBox="0 0 22.80 45.80">
<ellipse cx="11.40" cy="22.90" rx="10.40" ry="21.90" fill="url(#spg)"/>
<path d="M21.20 16.03 A10.40 21.90 0 0 1 4.56 41.22" stroke="#3c3c3c" stroke-width="1.6" fill="none" stroke-dasharray="1.6 1.4"/>
<path d="M2.74 21.98H19.61" stroke="#a0a0a0" stroke-width="1.3"/>
<path d="M2.74 23.59H19.61" stroke="#ececec" stroke-width="1.1"/>
<path d="M8.66 18.32L11.86 10.08" stroke="#222" stroke-width="1.9"/>
<path d="M11.86 10.99L15.05 18.32" stroke="#f2f2f2" stroke-width="1.4"/>
<path d="M8.21 27.48H14.14M10.03 27.48L10.72 34.81" stroke="#2a2a2a" stroke-width="1.9"/>
</svg>
<div class="a " style="left:2150.20px;top:889.50px;width:88.40px;height:44.10px;box-sizing:border-box;border-style:solid;border-width:5.70px 6.00px 8.60px 6.50px;border-color:#8c8c8c #bdbdbd #bfbfbf #919191;background:#fbfbfb;"></div>
<div class="a " style="left:2150.20px;top:889.50px;width:88.40px;height:5.70px;background:linear-gradient(180deg,#aaaaaa,#848484);clip-path:polygon(0 0,100% 0,calc(100% - 6.00px) 100%,6.50px 100%)"></div>
<div class="a " style="left:2150.20px;top:889.50px;width:6.50px;height:44.10px;background:linear-gradient(90deg,#a8a8a8,#8a8a8a);clip-path:polygon(0 0,100% 5.70px,100% calc(100% - 8.60px),0 100%)"></div>
<div class="a" style="left:2156.7px;top:895.2px;width:69.90px;height:29.8px;overflow:hidden">
<div class="tx" style="left:3.23px;top:15.80px;font-family:'Liberation Sans';font-weight:400;font-size:22px;color:#000;transform:scaleX(0.9750);-webkit-text-stroke:.2px #000;">100000</div>
</div>
<div class="tx" style="left:1321.83px;top:913.40px;font-family:'Liberation Sans';font-weight:400;font-size:22px;color:#000;transform:scaleX(0.9664);-webkit-text-stroke:.2px #000;">Grating Stage</div>
</div>
<div class="tx" style="left:1250.97px;top:1443.50px;font-family:'Liberation Sans';font-weight:400;font-size:22px;color:#000;transform:scaleX(0.9345);-webkit-text-stroke:.2px #000;">FPGA Read Error</div>
<div class="a " style="left:1251.00px;top:1458.10px;width:307.60px;height:233.90px;box-sizing:border-box;border-style:solid;border-width:5.90px 8.60px 6.00px 6.80px;border-color:#a0a0a0 #efefef #f0f0f0 #9c9c9c;background:#b3b3b3;"></div>
<div class="a " style="left:1251.00px;top:1458.10px;width:307.60px;height:5.90px;background:linear-gradient(180deg,#d9d9d9,#a9a9a9);clip-path:polygon(0 0,100% 0,calc(100% - 8.60px) 100%,6.80px 100%)"></div>
<div class="a " style="left:1251.00px;top:1458.10px;width:6.80px;height:233.90px;background:linear-gradient(90deg,#dadada,#ababab);clip-path:polygon(0 0,100% 5.90px,100% calc(100% - 6.00px),0 100%)"></div>
<div class="tx" style="left:1260.30px;top:1482.50px;font-family:'Liberation Sans';font-weight:400;font-size:22px;color:#000;transform:scaleX(1.0120);-webkit-text-stroke:.2px #000;">status</div>
<div class="tx" style="left:1352.70px;top:1481.60px;font-family:'Liberation Sans';font-weight:400;font-size:22px;color:#000;transform:scaleX(0.9290);-webkit-text-stroke:.2px #000;">code</div>
<div class="a " style="left:1273.00px;top:1500.50px;width:37.30px;height:37.30px;box-sizing:border-box;border-style:solid;border-width:2.00px 6.00px 6.00px 2.00px;border-color:#dcdcdc #8e8e8e #8a8a8a #d8d8d8;background:#d0d0d0;"></div>
<svg class="a" style="left:1279px;top:1505px" width="24" height="24"><path d="M3 13 L9 20.5 L21 3.5" stroke="#000" stroke-width="6.5" fill="none" stroke-linejoin="miter" stroke-linecap="round"/><path d="M3.8 13.4 L9 19.2 L20.3 4.3" stroke="#62f24c" stroke-width="3.2" fill="none"/></svg>
<div class="a " style="left:1351.00px;top:1498.00px;width:199.00px;height:42.30px;box-sizing:border-box;border-style:solid;border-width:6.70px 7.50px 5.90px 7.60px;border-color:#8c8c8c #bdbdbd #bfbfbf #919191;background:#fff;"></div>
<div class="a " style="left:1351.00px;top:1498.00px;width:199.00px;height:6.70px;background:linear-gradient(180deg,#aaaaaa,#848484);clip-path:polygon(0 0,100% 0,calc(100% - 7.50px) 100%,7.60px 100%)"></div>
<div class="a " style="left:1351.00px;top:1498.00px;width:7.60px;height:42.30px;background:linear-gradient(90deg,#a8a8a8,#8a8a8a);clip-path:polygon(0 0,100% 6.70px,100% calc(100% - 5.90px),0 100%)"></div>
<div class="a " style="left:1358.60px;top:1504.70px;width:11.90px;height:29.70px;background:#8f8f8f"></div>
<div class="tx" style="left:1359.60px;top:1521.00px;font-family:'Liberation Sans';font-weight:400;font-size:16px;color:#d8d8d8;">d</div>
<div class="tx" style="left:1372.20px;top:1519.80px;font-family:'Liberation Sans';font-weight:400;font-size:22px;color:#000;transform:scaleX(0.9750);-webkit-text-stroke:.2px #000;">0</div>
<div class="tx" style="left:1262.00px;top:1570.60px;font-family:'Liberation Sans';font-weight:400;font-size:22px;color:#000;transform:scaleX(0.9529);-webkit-text-stroke:.2px #000;">source</div>
<div class="a " style="left:1260.30px;top:1587.80px;width:289.70px;height:97.50px;box-sizing:border-box;border-style:solid;border-width:6.80px 7.50px 6.80px 7.70px;border-color:#8c8c8c #bdbdbd #bfbfbf #919191;background:#fff;"></div>
<div class="a " style="left:1260.30px;top:1587.80px;width:289.70px;height:6.80px;background:linear-gradient(180deg,#aaaaaa,#848484);clip-path:polygon(0 0,100% 0,calc(100% - 7.50px) 100%,7.70px 100%)"></div>
<div class="a " style="left:1260.30px;top:1587.80px;width:7.70px;height:97.50px;background:linear-gradient(90deg,#a8a8a8,#8a8a8a);clip-path:polygon(0 0,100% 6.80px,100% calc(100% - 6.80px),0 100%)"></div>
<div class="a " style="left:1508.60px;top:1596.00px;width:31.40px;height:81.00px;background:#efefef"></div>
<svg class="a" style="left:1514px;top:1604px" width="20" height="14"><path d="M2 12 L10 4 L18 12" stroke="#555" stroke-width="3.2" fill="none"/></svg>
<svg class="a" style="left:1514px;top:1662px" width="20" height="14"><path d="M2 2 L10 10 L18 2" stroke="#555" stroke-width="3.2" fill="none"/></svg>
<div class="tx" style="left:1575.22px;top:1439.30px;font-family:'Liberation Sans';font-weight:400;font-size:22px;color:#000;transform:scaleX(0.9751);-webkit-text-stroke:.2px #000;">Stage Error</div>
<div class="a " style="left:1575.30px;top:1453.90px;width:307.60px;height:233.90px;box-sizing:border-box;border-style:solid;border-width:5.90px 8.60px 6.00px 6.80px;border-color:#a0a0a0 #efefef #f0f0f0 #9c9c9c;background:#b3b3b3;"></div>
<div class="a " style="left:1575.30px;top:1453.90px;width:307.60px;height:5.90px;background:linear-gradient(180deg,#d9d9d9,#a9a9a9);clip-path:polygon(0 0,100% 0,calc(100% - 8.60px) 100%,6.80px 100%)"></div>
<div class="a " style="left:1575.30px;top:1453.90px;width:6.80px;height:233.90px;background:linear-gradient(90deg,#dadada,#ababab);clip-path:polygon(0 0,100% 5.90px,100% calc(100% - 6.00px),0 100%)"></div>
<div class="tx" style="left:1584.60px;top:1478.30px;font-family:'Liberation Sans';font-weight:400;font-size:22px;color:#000;transform:scaleX(1.0120);-webkit-text-stroke:.2px #000;">status</div>
<div class="tx" style="left:1677.00px;top:1477.40px;font-family:'Liberation Sans';font-weight:400;font-size:22px;color:#000;transform:scaleX(0.9290);-webkit-text-stroke:.2px #000;">code</div>
<div class="a " style="left:1597.30px;top:1496.30px;width:37.30px;height:37.30px;box-sizing:border-box;border-style:solid;border-width:2.00px 6.00px 6.00px 2.00px;border-color:#dcdcdc #8e8e8e #8a8a8a #d8d8d8;background:#d0d0d0;"></div>
<svg class="a" style="left:1603.3px;top:1500.8px" width="24" height="24"><path d="M3 13 L9 20.5 L21 3.5" stroke="#000" stroke-width="6.5" fill="none" stroke-linejoin="miter" stroke-linecap="round"/><path d="M3.8 13.4 L9 19.2 L20.3 4.3" stroke="#62f24c" stroke-width="3.2" fill="none"/></svg>
<div class="a " style="left:1675.30px;top:1493.80px;width:199.00px;height:42.30px;box-sizing:border-box;border-style:solid;border-width:6.70px 7.50px 5.90px 7.60px;border-color:#8c8c8c #bdbdbd #bfbfbf #919191;background:#fff;"></div>
<div class="a " style="left:1675.30px;top:1493.80px;width:199.00px;height:6.70px;background:linear-gradient(180deg,#aaaaaa,#848484);clip-path:polygon(0 0,100% 0,calc(100% - 7.50px) 100%,7.60px 100%)"></div>
<div class="a " style="left:1675.30px;top:1493.80px;width:7.60px;height:42.30px;background:linear-gradient(90deg,#a8a8a8,#8a8a8a);clip-path:polygon(0 0,100% 6.70px,100% calc(100% - 5.90px),0 100%)"></div>
<div class="a " style="left:1682.90px;top:1500.50px;width:11.90px;height:29.70px;background:#8f8f8f"></div>
<div class="tx" style="left:1683.90px;top:1516.80px;font-family:'Liberation Sans';font-weight:400;font-size:16px;color:#d8d8d8;">d</div>
<div class="tx" style="left:1696.50px;top:1515.60px;font-family:'Liberation Sans';font-weight:400;font-size:22px;color:#000;transform:scaleX(0.9750);-webkit-text-stroke:.2px #000;">0</div>
<div class="tx" style="left:1586.30px;top:1566.40px;font-family:'Liberation Sans';font-weight:400;font-size:22px;color:#000;transform:scaleX(0.9529);-webkit-text-stroke:.2px #000;">source</div>
<div class="a " style="left:1584.60px;top:1583.60px;width:289.70px;height:97.50px;box-sizing:border-box;border-style:solid;border-width:6.80px 7.50px 6.80px 7.70px;border-color:#8c8c8c #bdbdbd #bfbfbf #919191;background:#fff;"></div>
<div class="a " style="left:1584.60px;top:1583.60px;width:289.70px;height:6.80px;background:linear-gradient(180deg,#aaaaaa,#848484);clip-path:polygon(0 0,100% 0,calc(100% - 7.50px) 100%,7.70px 100%)"></div>
<div class="a " style="left:1584.60px;top:1583.60px;width:7.70px;height:97.50px;background:linear-gradient(90deg,#a8a8a8,#8a8a8a);clip-path:polygon(0 0,100% 6.80px,100% calc(100% - 6.80px),0 100%)"></div>
<div class="a " style="left:1832.90px;top:1591.80px;width:31.40px;height:81.00px;background:#efefef"></div>
<svg class="a" style="left:1838.3px;top:1599.8px" width="20" height="14"><path d="M2 12 L10 4 L18 12" stroke="#555" stroke-width="3.2" fill="none"/></svg>
<svg class="a" style="left:1838.3px;top:1657.8px" width="20" height="14"><path d="M2 2 L10 10 L18 2" stroke="#555" stroke-width="3.2" fill="none"/></svg>
</div>
</body></html>
